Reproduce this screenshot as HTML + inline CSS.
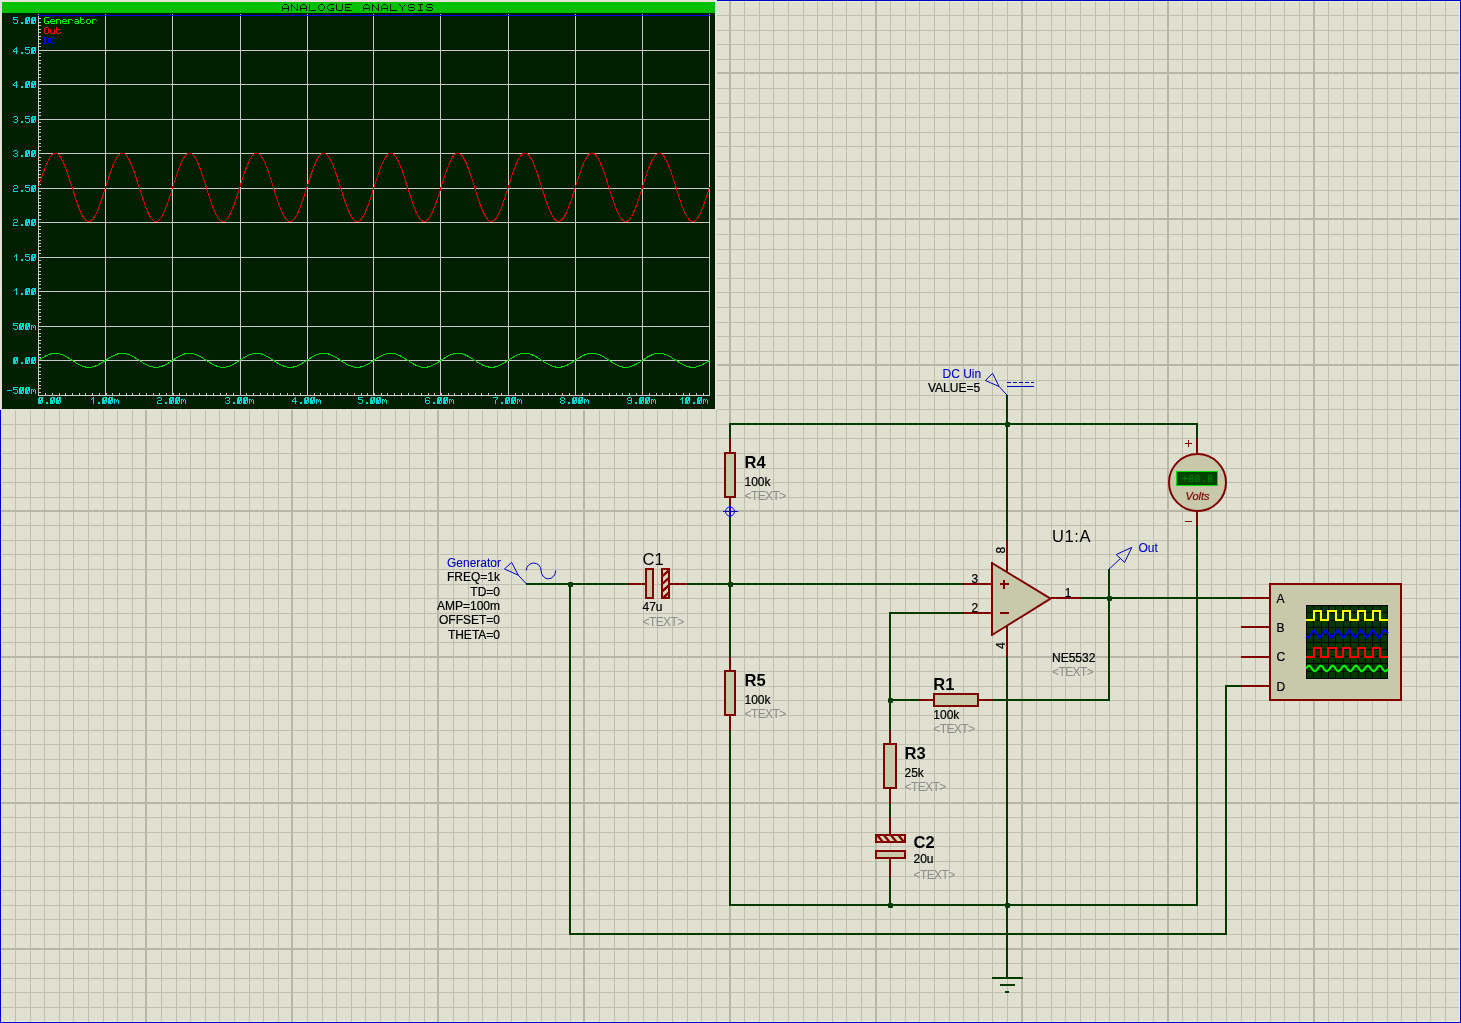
<!DOCTYPE html>
<html><head><meta charset="utf-8"><title>Proteus schematic</title>
<style>html,body{margin:0;padding:0;background:#E0E0D0;}body{width:1461px;height:1023px;overflow:hidden;position:relative;}svg{position:absolute;left:0;top:0;display:block;will-change:transform;}</style>
</head><body>
<svg width="1461" height="1023" viewBox="0 0 1461 1023">
<rect x="0" y="0" width="1461" height="1023" fill="#E0E0D0"/>
<g shape-rendering="crispEdges">
<rect x="1" y="1" width="1459" height="1" fill="#ECECD8"/>
<rect x="1" y="1021" width="1459" height="1" fill="#ECECD8"/>
<rect x="1459" y="1" width="1" height="1021" fill="#ECECD8"/>
</g>
<g shape-rendering="crispEdges">
<rect x="15" y="1" width="1" height="1021" fill="#BFBFAF"/>
<rect x="30" y="1" width="1" height="1021" fill="#BFBFAF"/>
<rect x="44" y="1" width="1" height="1021" fill="#BFBFAF"/>
<rect x="59" y="1" width="1" height="1021" fill="#BFBFAF"/>
<rect x="73" y="1" width="1" height="1021" fill="#BFBFAF"/>
<rect x="88" y="1" width="1" height="1021" fill="#BFBFAF"/>
<rect x="103" y="1" width="1" height="1021" fill="#BFBFAF"/>
<rect x="117" y="1" width="1" height="1021" fill="#BFBFAF"/>
<rect x="132" y="1" width="1" height="1021" fill="#BFBFAF"/>
<rect x="161" y="1" width="1" height="1021" fill="#BFBFAF"/>
<rect x="176" y="1" width="1" height="1021" fill="#BFBFAF"/>
<rect x="190" y="1" width="1" height="1021" fill="#BFBFAF"/>
<rect x="205" y="1" width="1" height="1021" fill="#BFBFAF"/>
<rect x="219" y="1" width="1" height="1021" fill="#BFBFAF"/>
<rect x="234" y="1" width="1" height="1021" fill="#BFBFAF"/>
<rect x="249" y="1" width="1" height="1021" fill="#BFBFAF"/>
<rect x="263" y="1" width="1" height="1021" fill="#BFBFAF"/>
<rect x="278" y="1" width="1" height="1021" fill="#BFBFAF"/>
<rect x="307" y="1" width="1" height="1021" fill="#BFBFAF"/>
<rect x="322" y="1" width="1" height="1021" fill="#BFBFAF"/>
<rect x="336" y="1" width="1" height="1021" fill="#BFBFAF"/>
<rect x="351" y="1" width="1" height="1021" fill="#BFBFAF"/>
<rect x="365" y="1" width="1" height="1021" fill="#BFBFAF"/>
<rect x="380" y="1" width="1" height="1021" fill="#BFBFAF"/>
<rect x="395" y="1" width="1" height="1021" fill="#BFBFAF"/>
<rect x="409" y="1" width="1" height="1021" fill="#BFBFAF"/>
<rect x="424" y="1" width="1" height="1021" fill="#BFBFAF"/>
<rect x="453" y="1" width="1" height="1021" fill="#BFBFAF"/>
<rect x="468" y="1" width="1" height="1021" fill="#BFBFAF"/>
<rect x="482" y="1" width="1" height="1021" fill="#BFBFAF"/>
<rect x="497" y="1" width="1" height="1021" fill="#BFBFAF"/>
<rect x="511" y="1" width="1" height="1021" fill="#BFBFAF"/>
<rect x="526" y="1" width="1" height="1021" fill="#BFBFAF"/>
<rect x="541" y="1" width="1" height="1021" fill="#BFBFAF"/>
<rect x="555" y="1" width="1" height="1021" fill="#BFBFAF"/>
<rect x="570" y="1" width="1" height="1021" fill="#BFBFAF"/>
<rect x="599" y="1" width="1" height="1021" fill="#BFBFAF"/>
<rect x="614" y="1" width="1" height="1021" fill="#BFBFAF"/>
<rect x="628" y="1" width="1" height="1021" fill="#BFBFAF"/>
<rect x="643" y="1" width="1" height="1021" fill="#BFBFAF"/>
<rect x="657" y="1" width="1" height="1021" fill="#BFBFAF"/>
<rect x="672" y="1" width="1" height="1021" fill="#BFBFAF"/>
<rect x="687" y="1" width="1" height="1021" fill="#BFBFAF"/>
<rect x="701" y="1" width="1" height="1021" fill="#BFBFAF"/>
<rect x="716" y="1" width="1" height="1021" fill="#BFBFAF"/>
<rect x="744" y="1" width="1" height="1021" fill="#BFBFAF"/>
<rect x="759" y="1" width="1" height="1021" fill="#BFBFAF"/>
<rect x="773" y="1" width="1" height="1021" fill="#BFBFAF"/>
<rect x="788" y="1" width="1" height="1021" fill="#BFBFAF"/>
<rect x="803" y="1" width="1" height="1021" fill="#BFBFAF"/>
<rect x="817" y="1" width="1" height="1021" fill="#BFBFAF"/>
<rect x="832" y="1" width="1" height="1021" fill="#BFBFAF"/>
<rect x="846" y="1" width="1" height="1021" fill="#BFBFAF"/>
<rect x="861" y="1" width="1" height="1021" fill="#BFBFAF"/>
<rect x="890" y="1" width="1" height="1021" fill="#BFBFAF"/>
<rect x="905" y="1" width="1" height="1021" fill="#BFBFAF"/>
<rect x="919" y="1" width="1" height="1021" fill="#BFBFAF"/>
<rect x="934" y="1" width="1" height="1021" fill="#BFBFAF"/>
<rect x="949" y="1" width="1" height="1021" fill="#BFBFAF"/>
<rect x="963" y="1" width="1" height="1021" fill="#BFBFAF"/>
<rect x="978" y="1" width="1" height="1021" fill="#BFBFAF"/>
<rect x="992" y="1" width="1" height="1021" fill="#BFBFAF"/>
<rect x="1007" y="1" width="1" height="1021" fill="#BFBFAF"/>
<rect x="1036" y="1" width="1" height="1021" fill="#BFBFAF"/>
<rect x="1051" y="1" width="1" height="1021" fill="#BFBFAF"/>
<rect x="1065" y="1" width="1" height="1021" fill="#BFBFAF"/>
<rect x="1080" y="1" width="1" height="1021" fill="#BFBFAF"/>
<rect x="1095" y="1" width="1" height="1021" fill="#BFBFAF"/>
<rect x="1109" y="1" width="1" height="1021" fill="#BFBFAF"/>
<rect x="1124" y="1" width="1" height="1021" fill="#BFBFAF"/>
<rect x="1138" y="1" width="1" height="1021" fill="#BFBFAF"/>
<rect x="1153" y="1" width="1" height="1021" fill="#BFBFAF"/>
<rect x="1182" y="1" width="1" height="1021" fill="#BFBFAF"/>
<rect x="1197" y="1" width="1" height="1021" fill="#BFBFAF"/>
<rect x="1211" y="1" width="1" height="1021" fill="#BFBFAF"/>
<rect x="1226" y="1" width="1" height="1021" fill="#BFBFAF"/>
<rect x="1241" y="1" width="1" height="1021" fill="#BFBFAF"/>
<rect x="1255" y="1" width="1" height="1021" fill="#BFBFAF"/>
<rect x="1270" y="1" width="1" height="1021" fill="#BFBFAF"/>
<rect x="1284" y="1" width="1" height="1021" fill="#BFBFAF"/>
<rect x="1299" y="1" width="1" height="1021" fill="#BFBFAF"/>
<rect x="1328" y="1" width="1" height="1021" fill="#BFBFAF"/>
<rect x="1343" y="1" width="1" height="1021" fill="#BFBFAF"/>
<rect x="1357" y="1" width="1" height="1021" fill="#BFBFAF"/>
<rect x="1372" y="1" width="1" height="1021" fill="#BFBFAF"/>
<rect x="1387" y="1" width="1" height="1021" fill="#BFBFAF"/>
<rect x="1401" y="1" width="1" height="1021" fill="#BFBFAF"/>
<rect x="1416" y="1" width="1" height="1021" fill="#BFBFAF"/>
<rect x="1430" y="1" width="1" height="1021" fill="#BFBFAF"/>
<rect x="1445" y="1" width="1" height="1021" fill="#BFBFAF"/>
<rect x="1" y="15" width="1458" height="1" fill="#BFBFAF"/>
<rect x="1" y="30" width="1458" height="1" fill="#BFBFAF"/>
<rect x="1" y="44" width="1458" height="1" fill="#BFBFAF"/>
<rect x="1" y="59" width="1458" height="1" fill="#BFBFAF"/>
<rect x="1" y="88" width="1458" height="1" fill="#BFBFAF"/>
<rect x="1" y="103" width="1458" height="1" fill="#BFBFAF"/>
<rect x="1" y="117" width="1458" height="1" fill="#BFBFAF"/>
<rect x="1" y="132" width="1458" height="1" fill="#BFBFAF"/>
<rect x="1" y="146" width="1458" height="1" fill="#BFBFAF"/>
<rect x="1" y="161" width="1458" height="1" fill="#BFBFAF"/>
<rect x="1" y="176" width="1458" height="1" fill="#BFBFAF"/>
<rect x="1" y="190" width="1458" height="1" fill="#BFBFAF"/>
<rect x="1" y="205" width="1458" height="1" fill="#BFBFAF"/>
<rect x="1" y="234" width="1458" height="1" fill="#BFBFAF"/>
<rect x="1" y="249" width="1458" height="1" fill="#BFBFAF"/>
<rect x="1" y="263" width="1458" height="1" fill="#BFBFAF"/>
<rect x="1" y="278" width="1458" height="1" fill="#BFBFAF"/>
<rect x="1" y="292" width="1458" height="1" fill="#BFBFAF"/>
<rect x="1" y="307" width="1458" height="1" fill="#BFBFAF"/>
<rect x="1" y="322" width="1458" height="1" fill="#BFBFAF"/>
<rect x="1" y="336" width="1458" height="1" fill="#BFBFAF"/>
<rect x="1" y="351" width="1458" height="1" fill="#BFBFAF"/>
<rect x="1" y="380" width="1458" height="1" fill="#BFBFAF"/>
<rect x="1" y="395" width="1458" height="1" fill="#BFBFAF"/>
<rect x="1" y="409" width="1458" height="1" fill="#BFBFAF"/>
<rect x="1" y="424" width="1458" height="1" fill="#BFBFAF"/>
<rect x="1" y="438" width="1458" height="1" fill="#BFBFAF"/>
<rect x="1" y="453" width="1458" height="1" fill="#BFBFAF"/>
<rect x="1" y="468" width="1458" height="1" fill="#BFBFAF"/>
<rect x="1" y="482" width="1458" height="1" fill="#BFBFAF"/>
<rect x="1" y="497" width="1458" height="1" fill="#BFBFAF"/>
<rect x="1" y="525" width="1458" height="1" fill="#BFBFAF"/>
<rect x="1" y="540" width="1458" height="1" fill="#BFBFAF"/>
<rect x="1" y="554" width="1458" height="1" fill="#BFBFAF"/>
<rect x="1" y="569" width="1458" height="1" fill="#BFBFAF"/>
<rect x="1" y="584" width="1458" height="1" fill="#BFBFAF"/>
<rect x="1" y="598" width="1458" height="1" fill="#BFBFAF"/>
<rect x="1" y="613" width="1458" height="1" fill="#BFBFAF"/>
<rect x="1" y="627" width="1458" height="1" fill="#BFBFAF"/>
<rect x="1" y="642" width="1458" height="1" fill="#BFBFAF"/>
<rect x="1" y="671" width="1458" height="1" fill="#BFBFAF"/>
<rect x="1" y="686" width="1458" height="1" fill="#BFBFAF"/>
<rect x="1" y="700" width="1458" height="1" fill="#BFBFAF"/>
<rect x="1" y="715" width="1458" height="1" fill="#BFBFAF"/>
<rect x="1" y="730" width="1458" height="1" fill="#BFBFAF"/>
<rect x="1" y="744" width="1458" height="1" fill="#BFBFAF"/>
<rect x="1" y="759" width="1458" height="1" fill="#BFBFAF"/>
<rect x="1" y="773" width="1458" height="1" fill="#BFBFAF"/>
<rect x="1" y="788" width="1458" height="1" fill="#BFBFAF"/>
<rect x="1" y="817" width="1458" height="1" fill="#BFBFAF"/>
<rect x="1" y="832" width="1458" height="1" fill="#BFBFAF"/>
<rect x="1" y="846" width="1458" height="1" fill="#BFBFAF"/>
<rect x="1" y="861" width="1458" height="1" fill="#BFBFAF"/>
<rect x="1" y="876" width="1458" height="1" fill="#BFBFAF"/>
<rect x="1" y="890" width="1458" height="1" fill="#BFBFAF"/>
<rect x="1" y="905" width="1458" height="1" fill="#BFBFAF"/>
<rect x="1" y="919" width="1458" height="1" fill="#BFBFAF"/>
<rect x="1" y="934" width="1458" height="1" fill="#BFBFAF"/>
<rect x="1" y="963" width="1458" height="1" fill="#BFBFAF"/>
<rect x="1" y="978" width="1458" height="1" fill="#BFBFAF"/>
<rect x="1" y="992" width="1458" height="1" fill="#BFBFAF"/>
<rect x="1" y="1007" width="1458" height="1" fill="#BFBFAF"/>
<rect x="145" y="1" width="2" height="1021" fill="#B7B7A7"/>
<rect x="291" y="1" width="2" height="1021" fill="#B7B7A7"/>
<rect x="437" y="1" width="2" height="1021" fill="#B7B7A7"/>
<rect x="583" y="1" width="2" height="1021" fill="#B7B7A7"/>
<rect x="729" y="1" width="2" height="1021" fill="#B7B7A7"/>
<rect x="875" y="1" width="2" height="1021" fill="#B7B7A7"/>
<rect x="1021" y="1" width="2" height="1021" fill="#B7B7A7"/>
<rect x="1167" y="1" width="2" height="1021" fill="#B7B7A7"/>
<rect x="1313" y="1" width="2" height="1021" fill="#B7B7A7"/>
<rect x="1" y="72" width="1458" height="2" fill="#B7B7A7"/>
<rect x="1" y="218" width="1458" height="2" fill="#B7B7A7"/>
<rect x="1" y="364" width="1458" height="2" fill="#B7B7A7"/>
<rect x="1" y="510" width="1458" height="2" fill="#B7B7A7"/>
<rect x="1" y="656" width="1458" height="2" fill="#B7B7A7"/>
<rect x="1" y="802" width="1458" height="2" fill="#B7B7A7"/>
<rect x="1" y="948" width="1458" height="2" fill="#B7B7A7"/>
</g>
<g shape-rendering="crispEdges">
<rect x="0" y="0" width="1461" height="1" fill="#0000C8"/>
<rect x="0" y="1022" width="1461" height="1" fill="#0000C8"/>
<rect x="0" y="0" width="1" height="1023" fill="#0000C8"/>
<rect x="1460" y="0" width="1" height="1023" fill="#0000C8"/>
</g>
<g shape-rendering="crispEdges">
<rect x="526" y="583" width="102" height="2" fill="#003C00"/>
<rect x="569" y="584" width="2" height="351" fill="#003C00"/>
<rect x="569" y="933" width="658" height="2" fill="#003C00"/>
<rect x="1225" y="685" width="2" height="250" fill="#003C00"/>
<rect x="1225" y="685" width="16" height="2" fill="#003C00"/>
<rect x="688" y="583" width="275" height="2" fill="#003C00"/>
<rect x="729" y="423" width="469" height="2" fill="#003C00"/>
<rect x="729" y="423" width="2" height="15" fill="#003C00"/>
<rect x="729" y="512" width="2" height="145" fill="#003C00"/>
<rect x="729" y="731" width="2" height="175" fill="#003C00"/>
<rect x="729" y="904" width="469" height="2" fill="#003C00"/>
<rect x="1196" y="423" width="2" height="15" fill="#003C00"/>
<rect x="1196" y="526" width="2" height="380" fill="#003C00"/>
<rect x="889" y="612" width="74" height="2" fill="#003C00"/>
<rect x="889" y="612" width="2" height="118" fill="#003C00"/>
<rect x="889" y="804" width="2" height="13" fill="#003C00"/>
<rect x="889" y="877" width="2" height="29" fill="#003C00"/>
<rect x="889" y="699" width="30" height="2" fill="#003C00"/>
<rect x="993" y="699" width="117" height="2" fill="#003C00"/>
<rect x="1108" y="569" width="2" height="132" fill="#003C00"/>
<rect x="1081" y="597" width="160" height="2" fill="#003C00"/>
<rect x="1006" y="395" width="2" height="145" fill="#003C00"/>
<rect x="1006" y="657" width="2" height="321" fill="#003C00"/>
<rect x="628" y="583" width="17" height="2" fill="#800000"/>
<rect x="670" y="583" width="18" height="2" fill="#800000"/>
<rect x="963" y="583" width="28" height="2" fill="#800000"/>
<rect x="963" y="612" width="28" height="2" fill="#800000"/>
<rect x="1051" y="597" width="30" height="2" fill="#800000"/>
<rect x="1006" y="540" width="2" height="32" fill="#800000"/>
<rect x="1006" y="626" width="2" height="31" fill="#800000"/>
<rect x="729" y="438" width="2" height="14" fill="#800000"/>
<rect x="729" y="498" width="2" height="14" fill="#800000"/>
<rect x="729" y="657" width="2" height="13" fill="#800000"/>
<rect x="729" y="716" width="2" height="15" fill="#800000"/>
<rect x="889" y="730" width="2" height="13" fill="#800000"/>
<rect x="889" y="789" width="2" height="15" fill="#800000"/>
<rect x="889" y="817" width="2" height="17" fill="#800000"/>
<rect x="889" y="859" width="2" height="18" fill="#800000"/>
<rect x="919" y="699" width="14" height="2" fill="#800000"/>
<rect x="979" y="699" width="14" height="2" fill="#800000"/>
<rect x="1196" y="438" width="2" height="15" fill="#800000"/>
<rect x="1196" y="512" width="2" height="14" fill="#800000"/>
<rect x="1241" y="597" width="28" height="2" fill="#800000"/>
<rect x="1241" y="626" width="28" height="2" fill="#800000"/>
<rect x="1241" y="656" width="28" height="2" fill="#800000"/>
<rect x="1241" y="685" width="28" height="2" fill="#800000"/>
<rect x="725" y="453" width="10" height="44" fill="#C8C8AA" stroke="#800000" stroke-width="2"/>
<rect x="725" y="671" width="10" height="44" fill="#C8C8AA" stroke="#800000" stroke-width="2"/>
<rect x="884" y="744" width="12" height="44" fill="#C8C8AA" stroke="#800000" stroke-width="2"/>
<rect x="934" y="694" width="44" height="12" fill="#C8C8AA" stroke="#800000" stroke-width="2"/>
<rect x="646" y="569" width="7" height="29" fill="#C8C8AA" stroke="#800000" stroke-width="2"/>
<rect x="876" y="851" width="29" height="7" fill="#C8C8AA" stroke="#800000" stroke-width="2"/>
</g>
<defs><clipPath id="c1h"><rect x="663" y="570" width="5" height="27"/></clipPath><clipPath id="c2h"><rect x="877" y="836" width="27" height="5"/></clipPath></defs>
<g shape-rendering="crispEdges">
<rect x="662" y="569" width="7" height="29" fill="#D4D8B8" stroke="#800000" stroke-width="2"/>
<rect x="876" y="835" width="29" height="7" fill="#D4D8B8" stroke="#800000" stroke-width="2"/>
</g>
<path d="M661,570.0 L670,561.9 M661,577.4 L670,569.3 M661,585.0 L670,576.9 M661,592.4 L670,584.3 M661,599.7 L670,591.6 " stroke="#800000" stroke-width="2.3" fill="none" clip-path="url(#c1h)"/>
<path d="M869.2,834 L876.6,843 M876.3,834 L883.7,843 M883.0,834 L890.4,843 M890.0,834 L897.4,843 M897.4,834 L904.8,843 " stroke="#800000" stroke-width="2.3" fill="none" clip-path="url(#c2h)"/>
<polygon points="992,563 992,635 1050.6,598.6" fill="#C8C8AA" stroke="#800000" stroke-width="2" stroke-linejoin="bevel"/>
<rect x="991" y="562" width="2" height="74" fill="#800000" shape-rendering="crispEdges"/>
<g shape-rendering="crispEdges">
<rect x="1000" y="583" width="9" height="2" fill="#800000"/>
<rect x="1003" y="580" width="2" height="9" fill="#800000"/>
<rect x="1000" y="612" width="9" height="2" fill="#800000"/>
</g>
<circle cx="1197.5" cy="482.5" r="28.5" fill="#C8C8AA" stroke="#800000" stroke-width="2"/>
<g shape-rendering="crispEdges">
<rect x="1176" y="471" width="42" height="15" fill="#00E000"/>
<rect x="1177" y="472" width="40" height="13" fill="#004400"/>
<rect x="1185" y="443" width="7" height="1" fill="#800000"/>
<rect x="1188" y="440" width="1" height="7" fill="#800000"/>
<rect x="1185" y="521" width="7" height="1" fill="#800000"/>
</g>
<text x="1197.5" y="482.0" font-family="'Liberation Mono', sans-serif" font-size="10.5" fill="#008800" font-weight="normal" text-anchor="middle">+88.8</text>
<text x="1197.5" y="499.8" font-family="'Liberation Sans', sans-serif" font-size="11" fill="#800000" font-weight="normal" text-anchor="middle" font-style="italic" stroke="#800000" stroke-width="0.22">Volts</text>
<g shape-rendering="crispEdges">
<rect x="1270" y="584" width="131" height="116" fill="#C8C8AA" stroke="#800000" stroke-width="2"/>
<rect x="1306" y="605" width="82" height="74" fill="#003800"/>
<rect x="1306" y="605" width="1" height="74" fill="#000000"/>
<rect x="1313" y="605" width="1" height="74" fill="#000000"/>
<rect x="1321" y="605" width="1" height="74" fill="#000000"/>
<rect x="1328" y="605" width="1" height="74" fill="#000000"/>
<rect x="1335" y="605" width="1" height="74" fill="#000000"/>
<rect x="1343" y="605" width="1" height="74" fill="#000000"/>
<rect x="1350" y="605" width="1" height="74" fill="#000000"/>
<rect x="1358" y="605" width="1" height="74" fill="#000000"/>
<rect x="1365" y="605" width="1" height="74" fill="#000000"/>
<rect x="1372" y="605" width="1" height="74" fill="#000000"/>
<rect x="1380" y="605" width="1" height="74" fill="#000000"/>
<rect x="1387" y="605" width="1" height="74" fill="#000000"/>
<rect x="1306" y="605" width="82" height="1" fill="#000000"/>
<rect x="1306" y="612" width="82" height="1" fill="#000000"/>
<rect x="1306" y="620" width="82" height="1" fill="#000000"/>
<rect x="1306" y="627" width="82" height="1" fill="#000000"/>
<rect x="1306" y="634" width="82" height="1" fill="#000000"/>
<rect x="1306" y="642" width="82" height="1" fill="#000000"/>
<rect x="1306" y="649" width="82" height="1" fill="#000000"/>
<rect x="1306" y="656" width="82" height="1" fill="#000000"/>
<rect x="1306" y="663" width="82" height="1" fill="#000000"/>
<rect x="1306" y="671" width="82" height="1" fill="#000000"/>
<rect x="1306" y="678" width="82" height="1" fill="#000000"/>
</g>
<polyline points="1306.0,620 1313.6,620 1313.6,611 1321.0,611 1321.0,620 1328.3,620 1328.3,611 1335.7,611 1335.7,620 1343.0,620 1343.0,611 1350.4,611 1350.4,620 1357.8,620 1357.8,611 1365.2,611 1365.2,620 1372.5,620 1372.5,611 1379.9,611 1379.9,620 1388.0,620" fill="none" stroke="#FFFF00" stroke-width="2" shape-rendering="crispEdges"/>
<polyline points="1306.0,657 1313.6,657 1313.6,648 1321.0,648 1321.0,657 1328.3,657 1328.3,648 1335.7,648 1335.7,657 1343.0,657 1343.0,648 1350.4,648 1350.4,657 1357.8,657 1357.8,648 1365.2,648 1365.2,657 1372.5,657 1372.5,648 1379.9,648 1379.9,657 1388.0,657" fill="none" stroke="#FF0000" stroke-width="2" shape-rendering="crispEdges"/>
<polyline points="1306.0,636.5 1308.3,637.8 1313.8,630.2 1319.7,637.8 1325.4,630.2 1331.6,637.8 1337.5,630.2 1343.2,637.8 1349.4,630.2 1354.9,637.8 1361.0,630.2 1366.8,637.8 1372.7,630.2 1378.8,637.8 1384.3,630.2 1388.1,633.0" fill="none" stroke="#0000FF" stroke-width="2"/>
<polyline points="1306.0,668.6 1307.0,667.2 1308.0,666.1 1309.0,665.7 1310.0,666.1 1311.0,667.1 1312.0,668.6 1313.0,670.0 1314.0,671.0 1315.0,671.3 1316.0,670.8 1317.0,669.7 1318.0,668.2 1319.0,666.9 1320.0,665.9 1321.0,665.7 1322.0,666.3 1323.0,667.5 1324.0,668.9 1325.0,670.3 1326.0,671.1 1327.0,671.2 1328.0,670.6 1329.0,669.3 1330.0,667.9 1331.0,666.6 1332.0,665.8 1333.0,665.8 1334.0,666.5 1335.0,667.8 1336.0,669.3 1337.0,670.6 1338.0,671.2 1339.0,671.2 1340.0,670.3 1341.0,669.0 1342.0,667.5 1343.0,666.3 1344.0,665.7 1345.0,665.9 1346.0,666.8 1347.0,668.2 1348.0,669.7 1349.0,670.8 1350.0,671.3 1351.0,671.0 1352.0,670.0 1353.0,668.6 1354.0,667.2 1355.0,666.1 1356.0,665.7 1357.0,666.1 1358.0,667.1 1359.0,668.6 1360.0,670.0 1361.0,671.0 1362.0,671.3 1363.0,670.8 1364.0,669.7 1365.0,668.2 1366.0,666.9 1367.0,665.9 1368.0,665.7 1369.0,666.3 1370.0,667.5 1371.0,668.9 1372.0,670.3 1373.0,671.1 1374.0,671.2 1375.0,670.6 1376.0,669.3 1377.0,667.9 1378.0,666.6 1379.0,665.8 1380.0,665.8 1381.0,666.5 1382.0,667.8 1383.0,669.3 1384.0,670.6 1385.0,671.2 1386.0,671.2 1387.0,670.3 1388.0,669.0" fill="none" stroke="#00FF00" stroke-width="2"/>
<text x="1276.5" y="602.9" font-family="'Liberation Sans', sans-serif" font-size="12" fill="#000000" font-weight="normal" text-anchor="start" stroke="#000000" stroke-width="0.22">A</text>
<text x="1276.5" y="631.7" font-family="'Liberation Sans', sans-serif" font-size="12" fill="#000000" font-weight="normal" text-anchor="start" stroke="#000000" stroke-width="0.22">B</text>
<text x="1276.5" y="661.4" font-family="'Liberation Sans', sans-serif" font-size="12" fill="#000000" font-weight="normal" text-anchor="start" stroke="#000000" stroke-width="0.22">C</text>
<text x="1276.5" y="690.7" font-family="'Liberation Sans', sans-serif" font-size="12" fill="#000000" font-weight="normal" text-anchor="start" stroke="#000000" stroke-width="0.22">D</text>
<g shape-rendering="crispEdges">
<rect x="992" y="977" width="31" height="2" fill="#003C00"/>
<rect x="1000" y="984" width="15" height="2" fill="#003C00"/>
<rect x="1005" y="991" width="4" height="2" fill="#003C00"/>
</g>
<rect x="568" y="582" width="5" height="5" rx="1.2" fill="#003C00"/>
<rect x="728" y="582" width="5" height="5" rx="1.2" fill="#003C00"/>
<rect x="1005" y="422" width="5" height="5" rx="1.2" fill="#003C00"/>
<rect x="888" y="698" width="5" height="5" rx="1.2" fill="#003C00"/>
<rect x="888" y="903" width="5" height="5" rx="1.2" fill="#003C00"/>
<rect x="1005" y="903" width="5" height="5" rx="1.2" fill="#003C00"/>
<rect x="1107" y="596" width="5" height="5" rx="1.2" fill="#003C00"/>
<path d="M504.5,569 L511.6,562.3 L518.3,575.2 Z M518.3,575.2 L526.5,584" fill="none" stroke="#0000C8" stroke-width="1"/>
<path d="M526.3,570.5 A7.4,7.5 0 0 1 541.1,570.5 A7.3,8.3 0 0 0 555.7,570.5" fill="none" stroke="#0000C8" stroke-width="1"/>
<path d="M985.3,380.5 L992.6,373.3 L999.1,386.5 Z M999.1,386.5 L1007.5,395.6" fill="none" stroke="#0000C8" stroke-width="1"/>
<path d="M1007,386.5 L1034,386.5" fill="none" stroke="#0000C8" stroke-width="1" shape-rendering="crispEdges"/>
<path d="M1007,382.5 L1034,382.5" fill="none" stroke="#0000C8" stroke-width="1" stroke-dasharray="4 2" shape-rendering="crispEdges"/>
<path d="M1109,569.2 L1120.4,558.5 M1116.2,554.5 L1131.8,547.4 L1124.6,562.4 Z" fill="none" stroke="#0000C8" stroke-width="1"/>
<circle cx="730" cy="511.5" r="4.5" fill="none" stroke="#0000C8" stroke-width="1"/>
<path d="M723,511.5 L738,511.5 M730,506 L730,517" fill="none" stroke="#0000C8" stroke-width="1" shape-rendering="crispEdges"/>
<text x="501" y="567" font-family="'Liberation Sans', sans-serif" font-size="12" fill="#0000C8" font-weight="normal" text-anchor="end" stroke="#0000C8" stroke-width="0.1">Generator</text>
<text x="500" y="581" font-family="'Liberation Sans', sans-serif" font-size="12" fill="#000000" font-weight="normal" text-anchor="end" stroke="#000000" stroke-width="0.22">FREQ=1k</text>
<text x="500" y="595.7" font-family="'Liberation Sans', sans-serif" font-size="12" fill="#000000" font-weight="normal" text-anchor="end" stroke="#000000" stroke-width="0.22">TD=0</text>
<text x="500" y="610" font-family="'Liberation Sans', sans-serif" font-size="12" fill="#000000" font-weight="normal" text-anchor="end" stroke="#000000" stroke-width="0.22">AMP=100m</text>
<text x="500" y="624.4" font-family="'Liberation Sans', sans-serif" font-size="12" fill="#000000" font-weight="normal" text-anchor="end" stroke="#000000" stroke-width="0.22">OFFSET=0</text>
<text x="500" y="638.8" font-family="'Liberation Sans', sans-serif" font-size="12" fill="#000000" font-weight="normal" text-anchor="end" stroke="#000000" stroke-width="0.22">THETA=0</text>
<text x="942.5" y="377.8" font-family="'Liberation Sans', sans-serif" font-size="12" fill="#0000C8" font-weight="normal" text-anchor="start" stroke="#0000C8" stroke-width="0.1">DC Uin</text>
<text x="928" y="391.6" font-family="'Liberation Sans', sans-serif" font-size="12" fill="#000000" font-weight="normal" text-anchor="start" stroke="#000000" stroke-width="0.22">VALUE=5</text>
<text x="1138.5" y="551.9" font-family="'Liberation Sans', sans-serif" font-size="12" fill="#0000C8" font-weight="normal" text-anchor="start" stroke="#0000C8" stroke-width="0.1">Out</text>
<text x="642.5" y="564.6" font-family="'Liberation Sans', sans-serif" font-size="16.5" fill="#000000" font-weight="normal" text-anchor="start">C1</text>
<text x="642.5" y="610.6" font-family="'Liberation Sans', sans-serif" font-size="12" fill="#000000" font-weight="normal" text-anchor="start" stroke="#000000" stroke-width="0.22">47u</text>
<text x="642.5" y="625.6" font-family="'Liberation Sans', sans-serif" font-size="12" fill="#8C8C8C" font-weight="normal" text-anchor="start" letter-spacing="-0.6">&lt;TEXT&gt;</text>
<text x="744.5" y="468.4" font-family="'Liberation Sans', sans-serif" font-size="16.5" fill="#000000" font-weight="bold" text-anchor="start">R4</text>
<text x="744.5" y="485.6" font-family="'Liberation Sans', sans-serif" font-size="12" fill="#000000" font-weight="normal" text-anchor="start" stroke="#000000" stroke-width="0.22">100k</text>
<text x="744.5" y="499.9" font-family="'Liberation Sans', sans-serif" font-size="12" fill="#8C8C8C" font-weight="normal" text-anchor="start" letter-spacing="-0.6">&lt;TEXT&gt;</text>
<text x="744.5" y="686.4" font-family="'Liberation Sans', sans-serif" font-size="16.5" fill="#000000" font-weight="bold" text-anchor="start">R5</text>
<text x="744.5" y="703.6" font-family="'Liberation Sans', sans-serif" font-size="12" fill="#000000" font-weight="normal" text-anchor="start" stroke="#000000" stroke-width="0.22">100k</text>
<text x="744.5" y="717.9" font-family="'Liberation Sans', sans-serif" font-size="12" fill="#8C8C8C" font-weight="normal" text-anchor="start" letter-spacing="-0.6">&lt;TEXT&gt;</text>
<text x="933.3" y="689.7" font-family="'Liberation Sans', sans-serif" font-size="16.5" fill="#000000" font-weight="bold" text-anchor="start">R1</text>
<text x="933.3" y="718.7" font-family="'Liberation Sans', sans-serif" font-size="12" fill="#000000" font-weight="normal" text-anchor="start" stroke="#000000" stroke-width="0.22">100k</text>
<text x="933.3" y="733.3" font-family="'Liberation Sans', sans-serif" font-size="12" fill="#8C8C8C" font-weight="normal" text-anchor="start" letter-spacing="-0.6">&lt;TEXT&gt;</text>
<text x="904.5" y="759.3" font-family="'Liberation Sans', sans-serif" font-size="16.5" fill="#000000" font-weight="bold" text-anchor="start">R3</text>
<text x="904.5" y="776.5" font-family="'Liberation Sans', sans-serif" font-size="12" fill="#000000" font-weight="normal" text-anchor="start" stroke="#000000" stroke-width="0.22">25k</text>
<text x="904.5" y="790.7" font-family="'Liberation Sans', sans-serif" font-size="12" fill="#8C8C8C" font-weight="normal" text-anchor="start" letter-spacing="-0.6">&lt;TEXT&gt;</text>
<text x="913.5" y="847.7" font-family="'Liberation Sans', sans-serif" font-size="16.5" fill="#000000" font-weight="bold" text-anchor="start">C2</text>
<text x="913.5" y="863.4" font-family="'Liberation Sans', sans-serif" font-size="12" fill="#000000" font-weight="normal" text-anchor="start" stroke="#000000" stroke-width="0.22">20u</text>
<text x="913.5" y="878.5" font-family="'Liberation Sans', sans-serif" font-size="12" fill="#8C8C8C" font-weight="normal" text-anchor="start" letter-spacing="-0.6">&lt;TEXT&gt;</text>
<text x="1052" y="542.4" font-family="'Liberation Sans', sans-serif" font-size="16.5" fill="#000000" font-weight="normal" text-anchor="start" letter-spacing="0.6">U1:A</text>
<text x="1052" y="661.7" font-family="'Liberation Sans', sans-serif" font-size="12" fill="#000000" font-weight="normal" text-anchor="start" stroke="#000000" stroke-width="0.22">NE5532</text>
<text x="1052" y="676.2" font-family="'Liberation Sans', sans-serif" font-size="12" fill="#8C8C8C" font-weight="normal" text-anchor="start" letter-spacing="-0.6">&lt;TEXT&gt;</text>
<text x="971.5" y="582.5" font-family="'Liberation Sans', sans-serif" font-size="12" fill="#000000" font-weight="normal" text-anchor="start" stroke="#000000" stroke-width="0.22">3</text>
<text x="971.5" y="611.8" font-family="'Liberation Sans', sans-serif" font-size="12" fill="#000000" font-weight="normal" text-anchor="start" stroke="#000000" stroke-width="0.22">2</text>
<text x="1064.8" y="596.7" font-family="'Liberation Sans', sans-serif" font-size="12" fill="#000000" font-weight="normal" text-anchor="start" stroke="#000000" stroke-width="0.22">1</text>
<text x="0" y="0" font-family="'Liberation Sans', sans-serif" font-size="12" fill="#000000" font-weight="normal" text-anchor="start" stroke="#000000" stroke-width="0.22" transform="translate(1005,553.5) rotate(-90)">8</text>
<text x="0" y="0" font-family="'Liberation Sans', sans-serif" font-size="12" fill="#000000" font-weight="normal" text-anchor="start" stroke="#000000" stroke-width="0.22" transform="translate(1005,649) rotate(-90)">4</text>
<g shape-rendering="crispEdges">
<rect x="0" y="0" width="717" height="410" fill="#E4E2D6"/>
<rect x="2" y="2" width="713" height="407" fill="#001E00"/>
<rect x="2" y="2" width="713" height="11" fill="#00C000"/>
<rect x="38" y="14" width="1" height="382" fill="#C8C8C8"/>
<rect x="105" y="14" width="1" height="382" fill="#C8C8C8"/>
<rect x="172" y="14" width="1" height="382" fill="#C8C8C8"/>
<rect x="240" y="14" width="1" height="382" fill="#C8C8C8"/>
<rect x="307" y="14" width="1" height="382" fill="#C8C8C8"/>
<rect x="373" y="14" width="1" height="382" fill="#C8C8C8"/>
<rect x="440" y="14" width="1" height="382" fill="#C8C8C8"/>
<rect x="508" y="14" width="1" height="382" fill="#C8C8C8"/>
<rect x="575" y="14" width="1" height="382" fill="#C8C8C8"/>
<rect x="642" y="14" width="1" height="382" fill="#C8C8C8"/>
<rect x="709" y="14" width="1" height="382" fill="#C8C8C8"/>
<rect x="38" y="15" width="672" height="1" fill="#C8C8C8"/>
<rect x="38" y="50" width="672" height="1" fill="#C8C8C8"/>
<rect x="38" y="84" width="672" height="1" fill="#C8C8C8"/>
<rect x="38" y="119" width="672" height="1" fill="#C8C8C8"/>
<rect x="38" y="153" width="672" height="1" fill="#C8C8C8"/>
<rect x="38" y="188" width="672" height="1" fill="#C8C8C8"/>
<rect x="38" y="222" width="672" height="1" fill="#C8C8C8"/>
<rect x="38" y="257" width="672" height="1" fill="#C8C8C8"/>
<rect x="38" y="291" width="672" height="1" fill="#C8C8C8"/>
<rect x="38" y="326" width="672" height="1" fill="#C8C8C8"/>
<rect x="38" y="360" width="672" height="1" fill="#C8C8C8"/>
<rect x="38" y="395" width="672" height="1" fill="#C8C8C8"/>
<rect x="39" y="15" width="2" height="1" fill="#C8C8C8"/>
<rect x="39" y="18" width="2" height="1" fill="#C8C8C8"/>
<rect x="39" y="22" width="2" height="1" fill="#C8C8C8"/>
<rect x="39" y="25" width="2" height="1" fill="#C8C8C8"/>
<rect x="39" y="29" width="2" height="1" fill="#C8C8C8"/>
<rect x="39" y="32" width="2" height="1" fill="#C8C8C8"/>
<rect x="39" y="36" width="2" height="1" fill="#C8C8C8"/>
<rect x="39" y="39" width="2" height="1" fill="#C8C8C8"/>
<rect x="39" y="43" width="2" height="1" fill="#C8C8C8"/>
<rect x="39" y="46" width="2" height="1" fill="#C8C8C8"/>
<rect x="39" y="50" width="2" height="1" fill="#C8C8C8"/>
<rect x="39" y="53" width="2" height="1" fill="#C8C8C8"/>
<rect x="39" y="56" width="2" height="1" fill="#C8C8C8"/>
<rect x="39" y="60" width="2" height="1" fill="#C8C8C8"/>
<rect x="39" y="63" width="2" height="1" fill="#C8C8C8"/>
<rect x="39" y="67" width="2" height="1" fill="#C8C8C8"/>
<rect x="39" y="70" width="2" height="1" fill="#C8C8C8"/>
<rect x="39" y="74" width="2" height="1" fill="#C8C8C8"/>
<rect x="39" y="77" width="2" height="1" fill="#C8C8C8"/>
<rect x="39" y="81" width="2" height="1" fill="#C8C8C8"/>
<rect x="39" y="84" width="2" height="1" fill="#C8C8C8"/>
<rect x="39" y="88" width="2" height="1" fill="#C8C8C8"/>
<rect x="39" y="91" width="2" height="1" fill="#C8C8C8"/>
<rect x="39" y="94" width="2" height="1" fill="#C8C8C8"/>
<rect x="39" y="98" width="2" height="1" fill="#C8C8C8"/>
<rect x="39" y="101" width="2" height="1" fill="#C8C8C8"/>
<rect x="39" y="105" width="2" height="1" fill="#C8C8C8"/>
<rect x="39" y="108" width="2" height="1" fill="#C8C8C8"/>
<rect x="39" y="112" width="2" height="1" fill="#C8C8C8"/>
<rect x="39" y="115" width="2" height="1" fill="#C8C8C8"/>
<rect x="39" y="119" width="2" height="1" fill="#C8C8C8"/>
<rect x="39" y="122" width="2" height="1" fill="#C8C8C8"/>
<rect x="39" y="126" width="2" height="1" fill="#C8C8C8"/>
<rect x="39" y="129" width="2" height="1" fill="#C8C8C8"/>
<rect x="39" y="132" width="2" height="1" fill="#C8C8C8"/>
<rect x="39" y="136" width="2" height="1" fill="#C8C8C8"/>
<rect x="39" y="139" width="2" height="1" fill="#C8C8C8"/>
<rect x="39" y="143" width="2" height="1" fill="#C8C8C8"/>
<rect x="39" y="146" width="2" height="1" fill="#C8C8C8"/>
<rect x="39" y="150" width="2" height="1" fill="#C8C8C8"/>
<rect x="39" y="153" width="2" height="1" fill="#C8C8C8"/>
<rect x="39" y="157" width="2" height="1" fill="#C8C8C8"/>
<rect x="39" y="160" width="2" height="1" fill="#C8C8C8"/>
<rect x="39" y="164" width="2" height="1" fill="#C8C8C8"/>
<rect x="39" y="167" width="2" height="1" fill="#C8C8C8"/>
<rect x="39" y="170" width="2" height="1" fill="#C8C8C8"/>
<rect x="39" y="174" width="2" height="1" fill="#C8C8C8"/>
<rect x="39" y="177" width="2" height="1" fill="#C8C8C8"/>
<rect x="39" y="181" width="2" height="1" fill="#C8C8C8"/>
<rect x="39" y="184" width="2" height="1" fill="#C8C8C8"/>
<rect x="39" y="188" width="2" height="1" fill="#C8C8C8"/>
<rect x="39" y="191" width="2" height="1" fill="#C8C8C8"/>
<rect x="39" y="195" width="2" height="1" fill="#C8C8C8"/>
<rect x="39" y="198" width="2" height="1" fill="#C8C8C8"/>
<rect x="39" y="202" width="2" height="1" fill="#C8C8C8"/>
<rect x="39" y="205" width="2" height="1" fill="#C8C8C8"/>
<rect x="39" y="208" width="2" height="1" fill="#C8C8C8"/>
<rect x="39" y="212" width="2" height="1" fill="#C8C8C8"/>
<rect x="39" y="215" width="2" height="1" fill="#C8C8C8"/>
<rect x="39" y="219" width="2" height="1" fill="#C8C8C8"/>
<rect x="39" y="222" width="2" height="1" fill="#C8C8C8"/>
<rect x="39" y="226" width="2" height="1" fill="#C8C8C8"/>
<rect x="39" y="229" width="2" height="1" fill="#C8C8C8"/>
<rect x="39" y="233" width="2" height="1" fill="#C8C8C8"/>
<rect x="39" y="236" width="2" height="1" fill="#C8C8C8"/>
<rect x="39" y="240" width="2" height="1" fill="#C8C8C8"/>
<rect x="39" y="243" width="2" height="1" fill="#C8C8C8"/>
<rect x="39" y="246" width="2" height="1" fill="#C8C8C8"/>
<rect x="39" y="250" width="2" height="1" fill="#C8C8C8"/>
<rect x="39" y="253" width="2" height="1" fill="#C8C8C8"/>
<rect x="39" y="257" width="2" height="1" fill="#C8C8C8"/>
<rect x="39" y="260" width="2" height="1" fill="#C8C8C8"/>
<rect x="39" y="264" width="2" height="1" fill="#C8C8C8"/>
<rect x="39" y="267" width="2" height="1" fill="#C8C8C8"/>
<rect x="39" y="271" width="2" height="1" fill="#C8C8C8"/>
<rect x="39" y="274" width="2" height="1" fill="#C8C8C8"/>
<rect x="39" y="278" width="2" height="1" fill="#C8C8C8"/>
<rect x="39" y="281" width="2" height="1" fill="#C8C8C8"/>
<rect x="39" y="284" width="2" height="1" fill="#C8C8C8"/>
<rect x="39" y="288" width="2" height="1" fill="#C8C8C8"/>
<rect x="39" y="291" width="2" height="1" fill="#C8C8C8"/>
<rect x="39" y="295" width="2" height="1" fill="#C8C8C8"/>
<rect x="39" y="298" width="2" height="1" fill="#C8C8C8"/>
<rect x="39" y="302" width="2" height="1" fill="#C8C8C8"/>
<rect x="39" y="305" width="2" height="1" fill="#C8C8C8"/>
<rect x="39" y="309" width="2" height="1" fill="#C8C8C8"/>
<rect x="39" y="312" width="2" height="1" fill="#C8C8C8"/>
<rect x="39" y="316" width="2" height="1" fill="#C8C8C8"/>
<rect x="39" y="319" width="2" height="1" fill="#C8C8C8"/>
<rect x="39" y="322" width="2" height="1" fill="#C8C8C8"/>
<rect x="39" y="326" width="2" height="1" fill="#C8C8C8"/>
<rect x="39" y="329" width="2" height="1" fill="#C8C8C8"/>
<rect x="39" y="333" width="2" height="1" fill="#C8C8C8"/>
<rect x="39" y="336" width="2" height="1" fill="#C8C8C8"/>
<rect x="39" y="340" width="2" height="1" fill="#C8C8C8"/>
<rect x="39" y="343" width="2" height="1" fill="#C8C8C8"/>
<rect x="39" y="347" width="2" height="1" fill="#C8C8C8"/>
<rect x="39" y="350" width="2" height="1" fill="#C8C8C8"/>
<rect x="39" y="354" width="2" height="1" fill="#C8C8C8"/>
<rect x="39" y="357" width="2" height="1" fill="#C8C8C8"/>
<rect x="39" y="360" width="2" height="1" fill="#C8C8C8"/>
<rect x="39" y="364" width="2" height="1" fill="#C8C8C8"/>
<rect x="39" y="367" width="2" height="1" fill="#C8C8C8"/>
<rect x="39" y="371" width="2" height="1" fill="#C8C8C8"/>
<rect x="39" y="374" width="2" height="1" fill="#C8C8C8"/>
<rect x="39" y="378" width="2" height="1" fill="#C8C8C8"/>
<rect x="39" y="381" width="2" height="1" fill="#C8C8C8"/>
<rect x="39" y="385" width="2" height="1" fill="#C8C8C8"/>
<rect x="39" y="388" width="2" height="1" fill="#C8C8C8"/>
<rect x="39" y="392" width="2" height="1" fill="#C8C8C8"/>
<rect x="39" y="395" width="2" height="1" fill="#C8C8C8"/>
<rect x="38" y="393" width="1" height="2" fill="#C8C8C8"/>
<rect x="45" y="393" width="1" height="2" fill="#C8C8C8"/>
<rect x="52" y="393" width="1" height="2" fill="#C8C8C8"/>
<rect x="59" y="393" width="1" height="2" fill="#C8C8C8"/>
<rect x="65" y="393" width="1" height="2" fill="#C8C8C8"/>
<rect x="72" y="393" width="1" height="2" fill="#C8C8C8"/>
<rect x="79" y="393" width="1" height="2" fill="#C8C8C8"/>
<rect x="85" y="393" width="1" height="2" fill="#C8C8C8"/>
<rect x="92" y="393" width="1" height="2" fill="#C8C8C8"/>
<rect x="99" y="393" width="1" height="2" fill="#C8C8C8"/>
<rect x="106" y="393" width="1" height="2" fill="#C8C8C8"/>
<rect x="112" y="393" width="1" height="2" fill="#C8C8C8"/>
<rect x="119" y="393" width="1" height="2" fill="#C8C8C8"/>
<rect x="126" y="393" width="1" height="2" fill="#C8C8C8"/>
<rect x="132" y="393" width="1" height="2" fill="#C8C8C8"/>
<rect x="139" y="393" width="1" height="2" fill="#C8C8C8"/>
<rect x="146" y="393" width="1" height="2" fill="#C8C8C8"/>
<rect x="153" y="393" width="1" height="2" fill="#C8C8C8"/>
<rect x="159" y="393" width="1" height="2" fill="#C8C8C8"/>
<rect x="166" y="393" width="1" height="2" fill="#C8C8C8"/>
<rect x="173" y="393" width="1" height="2" fill="#C8C8C8"/>
<rect x="179" y="393" width="1" height="2" fill="#C8C8C8"/>
<rect x="186" y="393" width="1" height="2" fill="#C8C8C8"/>
<rect x="193" y="393" width="1" height="2" fill="#C8C8C8"/>
<rect x="199" y="393" width="1" height="2" fill="#C8C8C8"/>
<rect x="206" y="393" width="1" height="2" fill="#C8C8C8"/>
<rect x="213" y="393" width="1" height="2" fill="#C8C8C8"/>
<rect x="220" y="393" width="1" height="2" fill="#C8C8C8"/>
<rect x="226" y="393" width="1" height="2" fill="#C8C8C8"/>
<rect x="233" y="393" width="1" height="2" fill="#C8C8C8"/>
<rect x="240" y="393" width="1" height="2" fill="#C8C8C8"/>
<rect x="246" y="393" width="1" height="2" fill="#C8C8C8"/>
<rect x="253" y="393" width="1" height="2" fill="#C8C8C8"/>
<rect x="260" y="393" width="1" height="2" fill="#C8C8C8"/>
<rect x="267" y="393" width="1" height="2" fill="#C8C8C8"/>
<rect x="273" y="393" width="1" height="2" fill="#C8C8C8"/>
<rect x="280" y="393" width="1" height="2" fill="#C8C8C8"/>
<rect x="287" y="393" width="1" height="2" fill="#C8C8C8"/>
<rect x="293" y="393" width="1" height="2" fill="#C8C8C8"/>
<rect x="300" y="393" width="1" height="2" fill="#C8C8C8"/>
<rect x="307" y="393" width="1" height="2" fill="#C8C8C8"/>
<rect x="314" y="393" width="1" height="2" fill="#C8C8C8"/>
<rect x="320" y="393" width="1" height="2" fill="#C8C8C8"/>
<rect x="327" y="393" width="1" height="2" fill="#C8C8C8"/>
<rect x="334" y="393" width="1" height="2" fill="#C8C8C8"/>
<rect x="340" y="393" width="1" height="2" fill="#C8C8C8"/>
<rect x="347" y="393" width="1" height="2" fill="#C8C8C8"/>
<rect x="354" y="393" width="1" height="2" fill="#C8C8C8"/>
<rect x="361" y="393" width="1" height="2" fill="#C8C8C8"/>
<rect x="367" y="393" width="1" height="2" fill="#C8C8C8"/>
<rect x="374" y="393" width="1" height="2" fill="#C8C8C8"/>
<rect x="381" y="393" width="1" height="2" fill="#C8C8C8"/>
<rect x="387" y="393" width="1" height="2" fill="#C8C8C8"/>
<rect x="394" y="393" width="1" height="2" fill="#C8C8C8"/>
<rect x="401" y="393" width="1" height="2" fill="#C8C8C8"/>
<rect x="408" y="393" width="1" height="2" fill="#C8C8C8"/>
<rect x="414" y="393" width="1" height="2" fill="#C8C8C8"/>
<rect x="421" y="393" width="1" height="2" fill="#C8C8C8"/>
<rect x="428" y="393" width="1" height="2" fill="#C8C8C8"/>
<rect x="434" y="393" width="1" height="2" fill="#C8C8C8"/>
<rect x="441" y="393" width="1" height="2" fill="#C8C8C8"/>
<rect x="448" y="393" width="1" height="2" fill="#C8C8C8"/>
<rect x="454" y="393" width="1" height="2" fill="#C8C8C8"/>
<rect x="461" y="393" width="1" height="2" fill="#C8C8C8"/>
<rect x="468" y="393" width="1" height="2" fill="#C8C8C8"/>
<rect x="475" y="393" width="1" height="2" fill="#C8C8C8"/>
<rect x="481" y="393" width="1" height="2" fill="#C8C8C8"/>
<rect x="488" y="393" width="1" height="2" fill="#C8C8C8"/>
<rect x="495" y="393" width="1" height="2" fill="#C8C8C8"/>
<rect x="501" y="393" width="1" height="2" fill="#C8C8C8"/>
<rect x="508" y="393" width="1" height="2" fill="#C8C8C8"/>
<rect x="515" y="393" width="1" height="2" fill="#C8C8C8"/>
<rect x="522" y="393" width="1" height="2" fill="#C8C8C8"/>
<rect x="528" y="393" width="1" height="2" fill="#C8C8C8"/>
<rect x="535" y="393" width="1" height="2" fill="#C8C8C8"/>
<rect x="542" y="393" width="1" height="2" fill="#C8C8C8"/>
<rect x="548" y="393" width="1" height="2" fill="#C8C8C8"/>
<rect x="555" y="393" width="1" height="2" fill="#C8C8C8"/>
<rect x="562" y="393" width="1" height="2" fill="#C8C8C8"/>
<rect x="569" y="393" width="1" height="2" fill="#C8C8C8"/>
<rect x="575" y="393" width="1" height="2" fill="#C8C8C8"/>
<rect x="582" y="393" width="1" height="2" fill="#C8C8C8"/>
<rect x="589" y="393" width="1" height="2" fill="#C8C8C8"/>
<rect x="595" y="393" width="1" height="2" fill="#C8C8C8"/>
<rect x="602" y="393" width="1" height="2" fill="#C8C8C8"/>
<rect x="609" y="393" width="1" height="2" fill="#C8C8C8"/>
<rect x="616" y="393" width="1" height="2" fill="#C8C8C8"/>
<rect x="622" y="393" width="1" height="2" fill="#C8C8C8"/>
<rect x="629" y="393" width="1" height="2" fill="#C8C8C8"/>
<rect x="636" y="393" width="1" height="2" fill="#C8C8C8"/>
<rect x="642" y="393" width="1" height="2" fill="#C8C8C8"/>
<rect x="649" y="393" width="1" height="2" fill="#C8C8C8"/>
<rect x="656" y="393" width="1" height="2" fill="#C8C8C8"/>
<rect x="662" y="393" width="1" height="2" fill="#C8C8C8"/>
<rect x="669" y="393" width="1" height="2" fill="#C8C8C8"/>
<rect x="676" y="393" width="1" height="2" fill="#C8C8C8"/>
<rect x="683" y="393" width="1" height="2" fill="#C8C8C8"/>
<rect x="689" y="393" width="1" height="2" fill="#C8C8C8"/>
<rect x="696" y="393" width="1" height="2" fill="#C8C8C8"/>
<rect x="703" y="393" width="1" height="2" fill="#C8C8C8"/>
<rect x="709" y="393" width="1" height="2" fill="#C8C8C8"/>
<rect x="38" y="15" width="672" height="1" fill="#0000E0"/>
</g>
<polyline points="38.5,187.3 39.0,185.7 39.5,184.1 40.0,182.5 40.5,180.9 41.0,179.4 41.5,177.8 42.0,176.3 42.5,174.8 43.0,173.3 43.5,171.9 44.0,170.5 44.5,169.1 45.0,167.7 45.5,166.5 46.0,165.2 46.5,164.0 47.0,162.9 47.5,161.8 48.0,160.7 48.5,159.8 49.0,158.8 49.5,158.0 50.0,157.2 50.5,156.5 51.0,155.8 51.5,155.2 52.0,154.7 52.5,154.2 53.0,153.9 53.5,153.6 54.0,153.3 54.5,153.2 55.0,153.1 55.5,153.1 56.0,153.2 56.5,153.3 57.0,153.5 57.5,153.8 58.0,154.2 58.5,154.6 59.0,155.2 59.5,155.7 60.0,156.4 60.5,157.1 61.0,157.9 61.5,158.7 62.0,159.7 62.5,160.6 63.0,161.7 63.5,162.8 64.0,163.9 64.5,165.1 65.0,166.3 65.5,167.6 66.0,168.9 66.5,170.3 67.0,171.7 67.5,173.2 68.0,174.6 68.5,176.1 69.0,177.7 69.5,179.2 70.0,180.8 70.5,182.4 71.0,183.9 71.5,185.5 72.0,187.1 72.5,188.7 73.0,190.3 73.5,191.9 74.0,193.5 74.5,195.1 75.0,196.6 75.5,198.2 76.0,199.7 76.5,201.1 77.0,202.6 77.5,204.0 78.0,205.4 78.5,206.7 79.0,208.0 79.5,209.3 80.0,210.5 80.5,211.6 81.0,212.7 81.5,213.8 82.0,214.8 82.5,215.7 83.0,216.5 83.5,217.3 84.0,218.1 84.5,218.7 85.0,219.3 85.5,219.9 86.0,220.3 86.5,220.7 87.0,221.0 87.5,221.2 88.0,221.4 88.5,221.5 89.0,221.5 89.5,221.4 90.0,221.3 90.5,221.1 91.0,220.8 91.5,220.4 92.0,220.0 92.5,219.5 93.0,218.9 93.5,218.3 94.0,217.6 94.5,216.8 95.0,215.9 95.5,215.0 96.0,214.1 96.5,213.0 97.0,212.0 97.5,210.8 98.0,209.6 98.5,208.4 99.0,207.1 99.5,205.8 100.0,204.4 100.5,203.0 101.0,201.6 101.5,200.1 102.0,198.6 102.5,197.1 103.0,195.5 103.5,194.0 104.0,192.4 104.5,190.8 105.0,189.2 105.5,187.6 106.0,186.0 106.5,184.4 107.0,182.8 107.5,181.2 108.0,179.7 108.5,178.1 109.0,176.6 109.5,175.1 110.0,173.6 110.5,172.2 111.0,170.7 111.5,169.4 112.0,168.0 112.5,166.7 113.0,165.5 113.5,164.2 114.0,163.1 114.5,162.0 115.0,160.9 115.5,159.9 116.0,159.0 116.5,158.1 117.0,157.3 117.5,156.6 118.0,155.9 118.5,155.3 119.0,154.8 119.5,154.3 120.0,153.9 120.5,153.6 121.0,153.4 121.5,153.2 122.0,153.1 122.5,153.1 123.0,153.2 123.5,153.3 124.0,153.5 124.5,153.8 125.0,154.1 125.5,154.6 126.0,155.1 126.5,155.6 127.0,156.3 127.5,157.0 128.0,157.7 128.5,158.6 129.0,159.5 129.5,160.4 130.0,161.5 130.5,162.5 131.0,163.7 131.5,164.8 132.0,166.1 132.5,167.4 133.0,168.7 133.5,170.0 134.0,171.4 134.5,172.9 135.0,174.3 135.5,175.8 136.0,177.4 136.5,178.9 137.0,180.5 137.5,182.0 138.0,183.6 138.5,185.2 139.0,186.8 139.5,188.4 140.0,190.0 140.5,191.6 141.0,193.2 141.5,194.8 142.0,196.3 142.5,197.9 143.0,199.4 143.5,200.8 144.0,202.3 144.5,203.7 145.0,205.1 145.5,206.5 146.0,207.8 146.5,209.0 147.0,210.2 147.5,211.4 148.0,212.5 148.5,213.6 149.0,214.6 149.5,215.5 150.0,216.4 150.5,217.2 151.0,217.9 151.5,218.6 152.0,219.2 152.5,219.8 153.0,220.2 153.5,220.6 154.0,220.9 154.5,221.2 155.0,221.4 155.5,221.5 156.0,221.5 156.5,221.5 157.0,221.3 157.5,221.1 158.0,220.9 158.5,220.5 159.0,220.1 159.5,219.6 160.0,219.0 160.5,218.4 161.0,217.7 161.5,216.9 162.0,216.1 162.5,215.2 163.0,214.3 163.5,213.3 164.0,212.2 164.5,211.1 165.0,209.9 165.5,208.7 166.0,207.4 166.5,206.1 167.0,204.7 167.5,203.3 168.0,201.9 168.5,200.4 169.0,198.9 169.5,197.4 170.0,195.9 170.5,194.3 171.0,192.7 171.5,191.1 172.0,189.5 172.5,187.9 173.0,186.3 173.5,184.7 174.0,183.1 174.5,181.6 175.0,180.0 175.5,178.4 176.0,176.9 176.5,175.4 177.0,173.9 177.5,172.4 178.0,171.0 178.5,169.6 179.0,168.3 179.5,167.0 180.0,165.7 180.5,164.5 181.0,163.3 181.5,162.2 182.0,161.1 182.5,160.1 183.0,159.2 183.5,158.3 184.0,157.5 184.5,156.7 185.0,156.1 185.5,155.4 186.0,154.9 186.5,154.4 187.0,154.0 187.5,153.7 188.0,153.4 188.5,153.2 189.0,153.1 189.5,153.1 190.0,153.1 190.5,153.3 191.0,153.4 191.5,153.7 192.0,154.1 192.5,154.5 193.0,154.9 193.5,155.5 194.0,156.1 194.5,156.8 195.0,157.6 195.5,158.4 196.0,159.3 196.5,160.2 197.0,161.2 197.5,162.3 198.0,163.4 198.5,164.6 199.0,165.8 199.5,167.1 200.0,168.4 200.5,169.8 201.0,171.2 201.5,172.6 202.0,174.0 202.5,175.5 203.0,177.1 203.5,178.6 204.0,180.1 204.5,181.7 205.0,183.3 205.5,184.9 206.0,186.5 206.5,188.1 207.0,189.7 207.5,191.3 208.0,192.9 208.5,194.5 209.0,196.0 209.5,197.5 210.0,199.1 210.5,200.6 211.0,202.0 211.5,203.4 212.0,204.8 212.5,206.2 213.0,207.5 213.5,208.8 214.0,210.0 214.5,211.2 215.0,212.3 215.5,213.4 216.0,214.4 216.5,215.3 217.0,216.2 217.5,217.0 218.0,217.8 218.5,218.5 219.0,219.1 219.5,219.7 220.0,220.1 220.5,220.5 221.0,220.9 221.5,221.2 222.0,221.3 222.5,221.5 223.0,221.5 223.5,221.5 224.0,221.4 224.5,221.2 225.0,220.9 225.5,220.6 226.0,220.2 226.5,219.7 227.0,219.2 227.5,218.5 228.0,217.9 228.5,217.1 229.0,216.3 229.5,215.4 230.0,214.5 230.5,213.5 231.0,212.4 231.5,211.3 232.0,210.1 232.5,208.9 233.0,207.6 233.5,206.3 234.0,205.0 234.5,203.6 235.0,202.2 235.5,200.7 236.0,199.2 236.5,197.7 237.0,196.2 237.5,194.6 238.0,193.0 238.5,191.5 239.0,189.9 239.5,188.3 240.0,186.7 240.5,185.1 241.0,183.5 241.5,181.9 242.0,180.3 242.5,178.7 243.0,177.2 243.5,175.7 244.0,174.2 244.5,172.7 245.0,171.3 245.5,169.9 246.0,168.5 246.5,167.2 247.0,165.9 247.5,164.7 248.0,163.5 248.5,162.4 249.0,161.3 249.5,160.3 250.0,159.4 250.5,158.5 251.0,157.7 251.5,156.9 252.0,156.2 252.5,155.6 253.0,155.0 253.5,154.5 254.0,154.1 254.5,153.7 255.0,153.5 255.5,153.3 256.0,153.1 256.5,153.1 257.0,153.1 257.5,153.2 258.0,153.4 258.5,153.7 259.0,154.0 259.5,154.4 260.0,154.8 260.5,155.4 261.0,156.0 261.5,156.7 262.0,157.4 262.5,158.2 263.0,159.1 263.5,160.0 264.0,161.0 264.5,162.1 265.0,163.2 265.5,164.4 266.0,165.6 266.5,166.8 267.0,168.1 267.5,169.5 268.0,170.9 268.5,172.3 269.0,173.8 269.5,175.2 270.0,176.7 270.5,178.3 271.0,179.8 271.5,181.4 272.0,183.0 272.5,184.6 273.0,186.2 273.5,187.8 274.0,189.4 274.5,191.0 275.0,192.6 275.5,194.1 276.0,195.7 276.5,197.2 277.0,198.8 277.5,200.3 278.0,201.7 278.5,203.2 279.0,204.6 279.5,205.9 280.0,207.2 280.5,208.5 281.0,209.8 281.5,210.9 282.0,212.1 282.5,213.1 283.0,214.2 283.5,215.1 284.0,216.0 284.5,216.9 285.0,217.6 285.5,218.3 286.0,219.0 286.5,219.5 287.0,220.0 287.5,220.5 288.0,220.8 288.5,221.1 289.0,221.3 289.5,221.4 290.0,221.5 290.5,221.5 291.0,221.4 291.5,221.2 292.0,221.0 292.5,220.7 293.0,220.3 293.5,219.8 294.0,219.3 294.5,218.7 295.0,218.0 295.5,217.3 296.0,216.5 296.5,215.6 297.0,214.7 297.5,213.7 298.0,212.6 298.5,211.5 299.0,210.4 299.5,209.1 300.0,207.9 300.5,206.6 301.0,205.2 301.5,203.9 302.0,202.4 302.5,201.0 303.0,199.5 303.5,198.0 304.0,196.5 304.5,194.9 305.0,193.4 305.5,191.8 306.0,190.2 306.5,188.6 307.0,187.0 307.5,185.4 308.0,183.8 308.5,182.2 309.0,180.6 309.5,179.1 310.0,177.5 310.5,176.0 311.0,174.5 311.5,173.0 312.0,171.6 312.5,170.2 313.0,168.8 313.5,167.5 314.0,166.2 314.5,165.0 315.0,163.8 315.5,162.6 316.0,161.6 316.5,160.5 317.0,159.6 317.5,158.7 318.0,157.8 318.5,157.0 319.0,156.3 319.5,155.7 320.0,155.1 320.5,154.6 321.0,154.2 321.5,153.8 322.0,153.5 322.5,153.3 323.0,153.2 323.5,153.1 324.0,153.1 324.5,153.2 325.0,153.4 325.5,153.6 326.0,153.9 326.5,154.3 327.0,154.7 327.5,155.3 328.0,155.9 328.5,156.5 329.0,157.3 329.5,158.1 330.0,158.9 330.5,159.8 331.0,160.8 331.5,161.9 332.0,163.0 332.5,164.1 333.0,165.3 333.5,166.6 334.0,167.9 334.5,169.2 335.0,170.6 335.5,172.0 336.0,173.5 336.5,174.9 337.0,176.4 337.5,178.0 338.0,179.5 338.5,181.1 339.0,182.7 339.5,184.3 340.0,185.9 340.5,187.5 341.0,189.1 341.5,190.7 342.0,192.2 342.5,193.8 343.0,195.4 343.5,196.9 344.0,198.5 344.5,200.0 345.0,201.4 345.5,202.9 346.0,204.3 346.5,205.7 347.0,207.0 347.5,208.3 348.0,209.5 348.5,210.7 349.0,211.8 349.5,212.9 350.0,214.0 350.5,214.9 351.0,215.9 351.5,216.7 352.0,217.5 352.5,218.2 353.0,218.9 353.5,219.4 354.0,220.0 354.5,220.4 355.0,220.8 355.5,221.1 356.0,221.3 356.5,221.4 357.0,221.5 357.5,221.5 358.0,221.4 358.5,221.3 359.0,221.0 359.5,220.7 360.0,220.4 360.5,219.9 361.0,219.4 361.5,218.8 362.0,218.1 362.5,217.4 363.0,216.6 363.5,215.8 364.0,214.8 364.5,213.9 365.0,212.8 365.5,211.7 366.0,210.6 366.5,209.4 367.0,208.1 367.5,206.9 368.0,205.5 368.5,204.1 369.0,202.7 369.5,201.3 370.0,199.8 370.5,198.3 371.0,196.8 371.5,195.2 372.0,193.7 372.5,192.1 373.0,190.5 373.5,188.9 374.0,187.3 374.5,185.7 375.0,184.1 375.5,182.5 376.0,180.9 376.5,179.4 377.0,177.8 377.5,176.3 378.0,174.8 378.5,173.3 379.0,171.9 379.5,170.5 380.0,169.1 380.5,167.7 381.0,166.5 381.5,165.2 382.0,164.0 382.5,162.9 383.0,161.8 383.5,160.7 384.0,159.8 384.5,158.8 385.0,158.0 385.5,157.2 386.0,156.5 386.5,155.8 387.0,155.2 387.5,154.7 388.0,154.2 388.5,153.9 389.0,153.6 389.5,153.3 390.0,153.2 390.5,153.1 391.0,153.1 391.5,153.2 392.0,153.3 392.5,153.5 393.0,153.8 393.5,154.2 394.0,154.6 394.5,155.2 395.0,155.7 395.5,156.4 396.0,157.1 396.5,157.9 397.0,158.7 397.5,159.7 398.0,160.6 398.5,161.7 399.0,162.8 399.5,163.9 400.0,165.1 400.5,166.3 401.0,167.6 401.5,168.9 402.0,170.3 402.5,171.7 403.0,173.2 403.5,174.6 404.0,176.1 404.5,177.7 405.0,179.2 405.5,180.8 406.0,182.4 406.5,183.9 407.0,185.5 407.5,187.1 408.0,188.7 408.5,190.3 409.0,191.9 409.5,193.5 410.0,195.1 410.5,196.6 411.0,198.2 411.5,199.7 412.0,201.1 412.5,202.6 413.0,204.0 413.5,205.4 414.0,206.7 414.5,208.0 415.0,209.3 415.5,210.5 416.0,211.6 416.5,212.7 417.0,213.8 417.5,214.8 418.0,215.7 418.5,216.5 419.0,217.3 419.5,218.1 420.0,218.7 420.5,219.3 421.0,219.9 421.5,220.3 422.0,220.7 422.5,221.0 423.0,221.2 423.5,221.4 424.0,221.5 424.5,221.5 425.0,221.4 425.5,221.3 426.0,221.1 426.5,220.8 427.0,220.4 427.5,220.0 428.0,219.5 428.5,218.9 429.0,218.3 429.5,217.6 430.0,216.8 430.5,215.9 431.0,215.0 431.5,214.1 432.0,213.0 432.5,212.0 433.0,210.8 433.5,209.6 434.0,208.4 434.5,207.1 435.0,205.8 435.5,204.4 436.0,203.0 436.5,201.6 437.0,200.1 437.5,198.6 438.0,197.1 438.5,195.5 439.0,194.0 439.5,192.4 440.0,190.8 440.5,189.2 441.0,187.6 441.5,186.0 442.0,184.4 442.5,182.8 443.0,181.2 443.5,179.7 444.0,178.1 444.5,176.6 445.0,175.1 445.5,173.6 446.0,172.2 446.5,170.7 447.0,169.4 447.5,168.0 448.0,166.7 448.5,165.5 449.0,164.2 449.5,163.1 450.0,162.0 450.5,160.9 451.0,159.9 451.5,159.0 452.0,158.1 452.5,157.3 453.0,156.6 453.5,155.9 454.0,155.3 454.5,154.8 455.0,154.3 455.5,153.9 456.0,153.6 456.5,153.4 457.0,153.2 457.5,153.1 458.0,153.1 458.5,153.2 459.0,153.3 459.5,153.5 460.0,153.8 460.5,154.1 461.0,154.6 461.5,155.1 462.0,155.6 462.5,156.3 463.0,157.0 463.5,157.7 464.0,158.6 464.5,159.5 465.0,160.4 465.5,161.5 466.0,162.5 466.5,163.7 467.0,164.8 467.5,166.1 468.0,167.4 468.5,168.7 469.0,170.0 469.5,171.4 470.0,172.9 470.5,174.3 471.0,175.8 471.5,177.4 472.0,178.9 472.5,180.5 473.0,182.0 473.5,183.6 474.0,185.2 474.5,186.8 475.0,188.4 475.5,190.0 476.0,191.6 476.5,193.2 477.0,194.8 477.5,196.3 478.0,197.9 478.5,199.4 479.0,200.8 479.5,202.3 480.0,203.7 480.5,205.1 481.0,206.5 481.5,207.8 482.0,209.0 482.5,210.2 483.0,211.4 483.5,212.5 484.0,213.6 484.5,214.6 485.0,215.5 485.5,216.4 486.0,217.2 486.5,217.9 487.0,218.6 487.5,219.2 488.0,219.8 488.5,220.2 489.0,220.6 489.5,220.9 490.0,221.2 490.5,221.4 491.0,221.5 491.5,221.5 492.0,221.5 492.5,221.3 493.0,221.1 493.5,220.9 494.0,220.5 494.5,220.1 495.0,219.6 495.5,219.0 496.0,218.4 496.5,217.7 497.0,216.9 497.5,216.1 498.0,215.2 498.5,214.3 499.0,213.3 499.5,212.2 500.0,211.1 500.5,209.9 501.0,208.7 501.5,207.4 502.0,206.1 502.5,204.7 503.0,203.3 503.5,201.9 504.0,200.4 504.5,198.9 505.0,197.4 505.5,195.9 506.0,194.3 506.5,192.7 507.0,191.1 507.5,189.5 508.0,187.9 508.5,186.3 509.0,184.7 509.5,183.1 510.0,181.6 510.5,180.0 511.0,178.4 511.5,176.9 512.0,175.4 512.5,173.9 513.0,172.4 513.5,171.0 514.0,169.6 514.5,168.3 515.0,167.0 515.5,165.7 516.0,164.5 516.5,163.3 517.0,162.2 517.5,161.1 518.0,160.1 518.5,159.2 519.0,158.3 519.5,157.5 520.0,156.7 520.5,156.1 521.0,155.4 521.5,154.9 522.0,154.4 522.5,154.0 523.0,153.7 523.5,153.4 524.0,153.2 524.5,153.1 525.0,153.1 525.5,153.1 526.0,153.3 526.5,153.4 527.0,153.7 527.5,154.1 528.0,154.5 528.5,154.9 529.0,155.5 529.5,156.1 530.0,156.8 530.5,157.6 531.0,158.4 531.5,159.3 532.0,160.2 532.5,161.2 533.0,162.3 533.5,163.4 534.0,164.6 534.5,165.8 535.0,167.1 535.5,168.4 536.0,169.8 536.5,171.2 537.0,172.6 537.5,174.0 538.0,175.5 538.5,177.1 539.0,178.6 539.5,180.1 540.0,181.7 540.5,183.3 541.0,184.9 541.5,186.5 542.0,188.1 542.5,189.7 543.0,191.3 543.5,192.9 544.0,194.5 544.5,196.0 545.0,197.5 545.5,199.1 546.0,200.6 546.5,202.0 547.0,203.4 547.5,204.8 548.0,206.2 548.5,207.5 549.0,208.8 549.5,210.0 550.0,211.2 550.5,212.3 551.0,213.4 551.5,214.4 552.0,215.3 552.5,216.2 553.0,217.0 553.5,217.8 554.0,218.5 554.5,219.1 555.0,219.7 555.5,220.1 556.0,220.5 556.5,220.9 557.0,221.2 557.5,221.3 558.0,221.5 558.5,221.5 559.0,221.5 559.5,221.4 560.0,221.2 560.5,220.9 561.0,220.6 561.5,220.2 562.0,219.7 562.5,219.2 563.0,218.5 563.5,217.9 564.0,217.1 564.5,216.3 565.0,215.4 565.5,214.5 566.0,213.5 566.5,212.4 567.0,211.3 567.5,210.1 568.0,208.9 568.5,207.6 569.0,206.3 569.5,205.0 570.0,203.6 570.5,202.2 571.0,200.7 571.5,199.2 572.0,197.7 572.5,196.2 573.0,194.6 573.5,193.0 574.0,191.5 574.5,189.9 575.0,188.3 575.5,186.7 576.0,185.1 576.5,183.5 577.0,181.9 577.5,180.3 578.0,178.7 578.5,177.2 579.0,175.7 579.5,174.2 580.0,172.7 580.5,171.3 581.0,169.9 581.5,168.5 582.0,167.2 582.5,165.9 583.0,164.7 583.5,163.5 584.0,162.4 584.5,161.3 585.0,160.3 585.5,159.4 586.0,158.5 586.5,157.7 587.0,156.9 587.5,156.2 588.0,155.6 588.5,155.0 589.0,154.5 589.5,154.1 590.0,153.7 590.5,153.5 591.0,153.3 591.5,153.1 592.0,153.1 592.5,153.1 593.0,153.2 593.5,153.4 594.0,153.7 594.5,154.0 595.0,154.4 595.5,154.8 596.0,155.4 596.5,156.0 597.0,156.7 597.5,157.4 598.0,158.2 598.5,159.1 599.0,160.0 599.5,161.0 600.0,162.1 600.5,163.2 601.0,164.4 601.5,165.6 602.0,166.8 602.5,168.1 603.0,169.5 603.5,170.9 604.0,172.3 604.5,173.8 605.0,175.2 605.5,176.7 606.0,178.3 606.5,179.8 607.0,181.4 607.5,183.0 608.0,184.6 608.5,186.2 609.0,187.8 609.5,189.4 610.0,191.0 610.5,192.6 611.0,194.1 611.5,195.7 612.0,197.2 612.5,198.8 613.0,200.3 613.5,201.7 614.0,203.2 614.5,204.6 615.0,205.9 615.5,207.2 616.0,208.5 616.5,209.8 617.0,210.9 617.5,212.1 618.0,213.1 618.5,214.2 619.0,215.1 619.5,216.0 620.0,216.9 620.5,217.6 621.0,218.3 621.5,219.0 622.0,219.5 622.5,220.0 623.0,220.5 623.5,220.8 624.0,221.1 624.5,221.3 625.0,221.4 625.5,221.5 626.0,221.5 626.5,221.4 627.0,221.2 627.5,221.0 628.0,220.7 628.5,220.3 629.0,219.8 629.5,219.3 630.0,218.7 630.5,218.0 631.0,217.3 631.5,216.5 632.0,215.6 632.5,214.7 633.0,213.7 633.5,212.6 634.0,211.5 634.5,210.4 635.0,209.1 635.5,207.9 636.0,206.6 636.5,205.2 637.0,203.9 637.5,202.4 638.0,201.0 638.5,199.5 639.0,198.0 639.5,196.5 640.0,194.9 640.5,193.4 641.0,191.8 641.5,190.2 642.0,188.6 642.5,187.0 643.0,185.4 643.5,183.8 644.0,182.2 644.5,180.6 645.0,179.1 645.5,177.5 646.0,176.0 646.5,174.5 647.0,173.0 647.5,171.6 648.0,170.2 648.5,168.8 649.0,167.5 649.5,166.2 650.0,165.0 650.5,163.8 651.0,162.6 651.5,161.6 652.0,160.5 652.5,159.6 653.0,158.7 653.5,157.8 654.0,157.0 654.5,156.3 655.0,155.7 655.5,155.1 656.0,154.6 656.5,154.2 657.0,153.8 657.5,153.5 658.0,153.3 658.5,153.2 659.0,153.1 659.5,153.1 660.0,153.2 660.5,153.4 661.0,153.6 661.5,153.9 662.0,154.3 662.5,154.7 663.0,155.3 663.5,155.9 664.0,156.5 664.5,157.3 665.0,158.1 665.5,158.9 666.0,159.8 666.5,160.8 667.0,161.9 667.5,163.0 668.0,164.1 668.5,165.3 669.0,166.6 669.5,167.9 670.0,169.2 670.5,170.6 671.0,172.0 671.5,173.5 672.0,174.9 672.5,176.4 673.0,178.0 673.5,179.5 674.0,181.1 674.5,182.7 675.0,184.3 675.5,185.9 676.0,187.5 676.5,189.1 677.0,190.7 677.5,192.2 678.0,193.8 678.5,195.4 679.0,196.9 679.5,198.5 680.0,200.0 680.5,201.4 681.0,202.9 681.5,204.3 682.0,205.7 682.5,207.0 683.0,208.3 683.5,209.5 684.0,210.7 684.5,211.8 685.0,212.9 685.5,214.0 686.0,214.9 686.5,215.9 687.0,216.7 687.5,217.5 688.0,218.2 688.5,218.9 689.0,219.4 689.5,220.0 690.0,220.4 690.5,220.8 691.0,221.1 691.5,221.3 692.0,221.4 692.5,221.5 693.0,221.5 693.5,221.4 694.0,221.3 694.5,221.0 695.0,220.7 695.5,220.4 696.0,219.9 696.5,219.4 697.0,218.8 697.5,218.1 698.0,217.4 698.5,216.6 699.0,215.8 699.5,214.8 700.0,213.9 700.5,212.8 701.0,211.7 701.5,210.6 702.0,209.4 702.5,208.1 703.0,206.9 703.5,205.5 704.0,204.1 704.5,202.7 705.0,201.3 705.5,199.8 706.0,198.3 706.5,196.8 707.0,195.2 707.5,193.7 708.0,192.1 708.5,190.5 709.0,188.9 709.5,187.3" fill="none" stroke="#E00000" stroke-width="1" shape-rendering="crispEdges"/>
<polyline points="38.5,360.3 39.0,360.0 39.5,359.6 40.0,359.3 40.5,359.0 41.0,358.7 41.5,358.4 42.0,358.0 42.5,357.7 43.0,357.4 43.5,357.1 44.0,356.9 44.5,356.6 45.0,356.3 45.5,356.0 46.0,355.8 46.5,355.5 47.0,355.3 47.5,355.1 48.0,354.9 48.5,354.7 49.0,354.5 49.5,354.3 50.0,354.1 50.5,354.0 51.0,353.9 51.5,353.7 52.0,353.6 52.5,353.5 53.0,353.5 53.5,353.4 54.0,353.3 54.5,353.3 55.0,353.3 55.5,353.3 56.0,353.3 56.5,353.3 57.0,353.4 57.5,353.5 58.0,353.5 58.5,353.6 59.0,353.7 59.5,353.8 60.0,354.0 60.5,354.1 61.0,354.3 61.5,354.5 62.0,354.6 62.5,354.8 63.0,355.1 63.5,355.3 64.0,355.5 64.5,355.8 65.0,356.0 65.5,356.3 66.0,356.5 66.5,356.8 67.0,357.1 67.5,357.4 68.0,357.7 68.5,358.0 69.0,358.3 69.5,358.6 70.0,359.0 70.5,359.3 71.0,359.6 71.5,359.9 72.0,360.3 72.5,360.6 73.0,360.9 73.5,361.2 74.0,361.6 74.5,361.9 75.0,362.2 75.5,362.5 76.0,362.8 76.5,363.1 77.0,363.4 77.5,363.7 78.0,364.0 78.5,364.3 79.0,364.5 79.5,364.8 80.0,365.0 80.5,365.3 81.0,365.5 81.5,365.7 82.0,365.9 82.5,366.1 83.0,366.3 83.5,366.4 84.0,366.6 84.5,366.7 85.0,366.9 85.5,367.0 86.0,367.1 86.5,367.1 87.0,367.2 87.5,367.2 88.0,367.3 88.5,367.3 89.0,367.3 89.5,367.3 90.0,367.3 90.5,367.2 91.0,367.2 91.5,367.1 92.0,367.0 92.5,366.9 93.0,366.8 93.5,366.6 94.0,366.5 94.5,366.3 95.0,366.2 95.5,366.0 96.0,365.8 96.5,365.6 97.0,365.3 97.5,365.1 98.0,364.9 98.5,364.6 99.0,364.4 99.5,364.1 100.0,363.8 100.5,363.5 101.0,363.2 101.5,362.9 102.0,362.6 102.5,362.3 103.0,362.0 103.5,361.7 104.0,361.3 104.5,361.0 105.0,360.7 105.5,360.4 106.0,360.0 106.5,359.7 107.0,359.4 107.5,359.1 108.0,358.7 108.5,358.4 109.0,358.1 109.5,357.8 110.0,357.5 110.5,357.2 111.0,356.9 111.5,356.6 112.0,356.4 112.5,356.1 113.0,355.8 113.5,355.6 114.0,355.3 114.5,355.1 115.0,354.9 115.5,354.7 116.0,354.5 116.5,354.3 117.0,354.2 117.5,354.0 118.0,353.9 118.5,353.8 119.0,353.6 119.5,353.6 120.0,353.5 120.5,353.4 121.0,353.4 121.5,353.3 122.0,353.3 122.5,353.3 123.0,353.3 123.5,353.3 124.0,353.4 124.5,353.4 125.0,353.5 125.5,353.6 126.0,353.7 126.5,353.8 127.0,353.9 127.5,354.1 128.0,354.2 128.5,354.4 129.0,354.6 129.5,354.8 130.0,355.0 130.5,355.2 131.0,355.5 131.5,355.7 132.0,356.0 132.5,356.2 133.0,356.5 133.5,356.8 134.0,357.1 134.5,357.3 135.0,357.6 135.5,358.0 136.0,358.3 136.5,358.6 137.0,358.9 137.5,359.2 138.0,359.5 138.5,359.9 139.0,360.2 139.5,360.5 140.0,360.9 140.5,361.2 141.0,361.5 141.5,361.8 142.0,362.1 142.5,362.5 143.0,362.8 143.5,363.1 144.0,363.4 144.5,363.7 145.0,363.9 145.5,364.2 146.0,364.5 146.5,364.7 147.0,365.0 147.5,365.2 148.0,365.5 148.5,365.7 149.0,365.9 149.5,366.1 150.0,366.2 150.5,366.4 151.0,366.6 151.5,366.7 152.0,366.8 152.5,366.9 153.0,367.0 153.5,367.1 154.0,367.2 154.5,367.2 155.0,367.3 155.5,367.3 156.0,367.3 156.5,367.3 157.0,367.3 157.5,367.2 158.0,367.2 158.5,367.1 159.0,367.0 159.5,366.9 160.0,366.8 160.5,366.7 161.0,366.5 161.5,366.4 162.0,366.2 162.5,366.0 163.0,365.8 163.5,365.6 164.0,365.4 164.5,365.2 165.0,364.9 165.5,364.7 166.0,364.4 166.5,364.1 167.0,363.9 167.5,363.6 168.0,363.3 168.5,363.0 169.0,362.7 169.5,362.4 170.0,362.1 170.5,361.7 171.0,361.4 171.5,361.1 172.0,360.8 172.5,360.4 173.0,360.1 173.5,359.8 174.0,359.4 174.5,359.1 175.0,358.8 175.5,358.5 176.0,358.2 176.5,357.9 177.0,357.6 177.5,357.3 178.0,357.0 178.5,356.7 179.0,356.4 179.5,356.1 180.0,355.9 180.5,355.6 181.0,355.4 181.5,355.2 182.0,354.9 182.5,354.7 183.0,354.5 183.5,354.4 184.0,354.2 184.5,354.0 185.0,353.9 185.5,353.8 186.0,353.7 186.5,353.6 187.0,353.5 187.5,353.4 188.0,353.4 188.5,353.3 189.0,353.3 189.5,353.3 190.0,353.3 190.5,353.3 191.0,353.4 191.5,353.4 192.0,353.5 192.5,353.6 193.0,353.7 193.5,353.8 194.0,353.9 194.5,354.1 195.0,354.2 195.5,354.4 196.0,354.6 196.5,354.8 197.0,355.0 197.5,355.2 198.0,355.4 198.5,355.7 199.0,355.9 199.5,356.2 200.0,356.4 200.5,356.7 201.0,357.0 201.5,357.3 202.0,357.6 202.5,357.9 203.0,358.2 203.5,358.5 204.0,358.8 204.5,359.2 205.0,359.5 205.5,359.8 206.0,360.1 206.5,360.5 207.0,360.8 207.5,361.1 208.0,361.4 208.5,361.8 209.0,362.1 209.5,362.4 210.0,362.7 210.5,363.0 211.0,363.3 211.5,363.6 212.0,363.9 212.5,364.2 213.0,364.4 213.5,364.7 214.0,364.9 214.5,365.2 215.0,365.4 215.5,365.6 216.0,365.8 216.5,366.0 217.0,366.2 217.5,366.4 218.0,366.5 218.5,366.7 219.0,366.8 219.5,366.9 220.0,367.0 220.5,367.1 221.0,367.2 221.5,367.2 222.0,367.3 222.5,367.3 223.0,367.3 223.5,367.3 224.0,367.3 224.5,367.2 225.0,367.2 225.5,367.1 226.0,367.0 226.5,366.9 227.0,366.8 227.5,366.7 228.0,366.6 228.5,366.4 229.0,366.2 229.5,366.1 230.0,365.9 230.5,365.7 231.0,365.4 231.5,365.2 232.0,365.0 232.5,364.7 233.0,364.5 233.5,364.2 234.0,363.9 234.5,363.6 235.0,363.3 235.5,363.0 236.0,362.7 236.5,362.4 237.0,362.1 237.5,361.8 238.0,361.5 238.5,361.2 239.0,360.8 239.5,360.5 240.0,360.2 240.5,359.8 241.0,359.5 241.5,359.2 242.0,358.9 242.5,358.5 243.0,358.2 243.5,357.9 244.0,357.6 244.5,357.3 245.0,357.0 245.5,356.7 246.0,356.5 246.5,356.2 247.0,355.9 247.5,355.7 248.0,355.4 248.5,355.2 249.0,355.0 249.5,354.8 250.0,354.6 250.5,354.4 251.0,354.2 251.5,354.1 252.0,353.9 252.5,353.8 253.0,353.7 253.5,353.6 254.0,353.5 254.5,353.4 255.0,353.4 255.5,353.3 256.0,353.3 256.5,353.3 257.0,353.3 257.5,353.3 258.0,353.4 258.5,353.4 259.0,353.5 259.5,353.6 260.0,353.7 260.5,353.8 261.0,353.9 261.5,354.0 262.0,354.2 262.5,354.4 263.0,354.5 263.5,354.7 264.0,354.9 264.5,355.1 265.0,355.4 265.5,355.6 266.0,355.9 266.5,356.1 267.0,356.4 267.5,356.7 268.0,356.9 268.5,357.2 269.0,357.5 269.5,357.8 270.0,358.1 270.5,358.5 271.0,358.8 271.5,359.1 272.0,359.4 272.5,359.7 273.0,360.1 273.5,360.4 274.0,360.7 274.5,361.1 275.0,361.4 275.5,361.7 276.0,362.0 276.5,362.3 277.0,362.6 277.5,363.0 278.0,363.3 278.5,363.5 279.0,363.8 279.5,364.1 280.0,364.4 280.5,364.6 281.0,364.9 281.5,365.1 282.0,365.4 282.5,365.6 283.0,365.8 283.5,366.0 284.0,366.2 284.5,366.4 285.0,366.5 285.5,366.7 286.0,366.8 286.5,366.9 287.0,367.0 287.5,367.1 288.0,367.2 288.5,367.2 289.0,367.3 289.5,367.3 290.0,367.3 290.5,367.3 291.0,367.3 291.5,367.2 292.0,367.2 292.5,367.1 293.0,367.0 293.5,367.0 294.0,366.8 294.5,366.7 295.0,366.6 295.5,366.4 296.0,366.3 296.5,366.1 297.0,365.9 297.5,365.7 298.0,365.5 298.5,365.3 299.0,365.0 299.5,364.8 300.0,364.5 300.5,364.2 301.0,364.0 301.5,363.7 302.0,363.4 302.5,363.1 303.0,362.8 303.5,362.5 304.0,362.2 304.5,361.9 305.0,361.5 305.5,361.2 306.0,360.9 306.5,360.6 307.0,360.2 307.5,359.9 308.0,359.6 308.5,359.3 309.0,358.9 309.5,358.6 310.0,358.3 310.5,358.0 311.0,357.7 311.5,357.4 312.0,357.1 312.5,356.8 313.0,356.5 313.5,356.2 314.0,356.0 314.5,355.7 315.0,355.5 315.5,355.3 316.0,355.0 316.5,354.8 317.0,354.6 317.5,354.4 318.0,354.3 318.5,354.1 319.0,354.0 319.5,353.8 320.0,353.7 320.5,353.6 321.0,353.5 321.5,353.4 322.0,353.4 322.5,353.3 323.0,353.3 323.5,353.3 324.0,353.3 324.5,353.3 325.0,353.4 325.5,353.4 326.0,353.5 326.5,353.5 327.0,353.6 327.5,353.7 328.0,353.9 328.5,354.0 329.0,354.2 329.5,354.3 330.0,354.5 330.5,354.7 331.0,354.9 331.5,355.1 332.0,355.3 332.5,355.6 333.0,355.8 333.5,356.1 334.0,356.3 334.5,356.6 335.0,356.9 335.5,357.2 336.0,357.5 336.5,357.8 337.0,358.1 337.5,358.4 338.0,358.7 338.5,359.0 339.0,359.4 339.5,359.7 340.0,360.0 340.5,360.3 341.0,360.7 341.5,361.0 342.0,361.3 342.5,361.6 343.0,362.0 343.5,362.3 344.0,362.6 344.5,362.9 345.0,363.2 345.5,363.5 346.0,363.8 346.5,364.1 347.0,364.3 347.5,364.6 348.0,364.8 348.5,365.1 349.0,365.3 349.5,365.5 350.0,365.8 350.5,366.0 351.0,366.1 351.5,366.3 352.0,366.5 352.5,366.6 353.0,366.8 353.5,366.9 354.0,367.0 354.5,367.1 355.0,367.1 355.5,367.2 356.0,367.3 356.5,367.3 357.0,367.3 357.5,367.3 358.0,367.3 358.5,367.3 359.0,367.2 359.5,367.1 360.0,367.1 360.5,367.0 361.0,366.9 361.5,366.7 362.0,366.6 362.5,366.5 363.0,366.3 363.5,366.1 364.0,365.9 364.5,365.7 365.0,365.5 365.5,365.3 366.0,365.1 366.5,364.8 367.0,364.6 367.5,364.3 368.0,364.0 368.5,363.7 369.0,363.5 369.5,363.2 370.0,362.9 370.5,362.6 371.0,362.2 371.5,361.9 372.0,361.6 372.5,361.3 373.0,361.0 373.5,360.6 374.0,360.3 374.5,360.0 375.0,359.6 375.5,359.3 376.0,359.0 376.5,358.7 377.0,358.4 377.5,358.0 378.0,357.7 378.5,357.4 379.0,357.1 379.5,356.9 380.0,356.6 380.5,356.3 381.0,356.0 381.5,355.8 382.0,355.5 382.5,355.3 383.0,355.1 383.5,354.9 384.0,354.7 384.5,354.5 385.0,354.3 385.5,354.1 386.0,354.0 386.5,353.9 387.0,353.7 387.5,353.6 388.0,353.5 388.5,353.5 389.0,353.4 389.5,353.3 390.0,353.3 390.5,353.3 391.0,353.3 391.5,353.3 392.0,353.3 392.5,353.4 393.0,353.5 393.5,353.5 394.0,353.6 394.5,353.7 395.0,353.8 395.5,354.0 396.0,354.1 396.5,354.3 397.0,354.5 397.5,354.6 398.0,354.8 398.5,355.1 399.0,355.3 399.5,355.5 400.0,355.8 400.5,356.0 401.0,356.3 401.5,356.5 402.0,356.8 402.5,357.1 403.0,357.4 403.5,357.7 404.0,358.0 404.5,358.3 405.0,358.6 405.5,359.0 406.0,359.3 406.5,359.6 407.0,359.9 407.5,360.3 408.0,360.6 408.5,360.9 409.0,361.2 409.5,361.6 410.0,361.9 410.5,362.2 411.0,362.5 411.5,362.8 412.0,363.1 412.5,363.4 413.0,363.7 413.5,364.0 414.0,364.3 414.5,364.5 415.0,364.8 415.5,365.0 416.0,365.3 416.5,365.5 417.0,365.7 417.5,365.9 418.0,366.1 418.5,366.3 419.0,366.4 419.5,366.6 420.0,366.7 420.5,366.9 421.0,367.0 421.5,367.1 422.0,367.1 422.5,367.2 423.0,367.2 423.5,367.3 424.0,367.3 424.5,367.3 425.0,367.3 425.5,367.3 426.0,367.2 426.5,367.2 427.0,367.1 427.5,367.0 428.0,366.9 428.5,366.8 429.0,366.6 429.5,366.5 430.0,366.3 430.5,366.2 431.0,366.0 431.5,365.8 432.0,365.6 432.5,365.3 433.0,365.1 433.5,364.9 434.0,364.6 434.5,364.4 435.0,364.1 435.5,363.8 436.0,363.5 436.5,363.2 437.0,362.9 437.5,362.6 438.0,362.3 438.5,362.0 439.0,361.7 439.5,361.3 440.0,361.0 440.5,360.7 441.0,360.4 441.5,360.0 442.0,359.7 442.5,359.4 443.0,359.1 443.5,358.7 444.0,358.4 444.5,358.1 445.0,357.8 445.5,357.5 446.0,357.2 446.5,356.9 447.0,356.6 447.5,356.4 448.0,356.1 448.5,355.8 449.0,355.6 449.5,355.3 450.0,355.1 450.5,354.9 451.0,354.7 451.5,354.5 452.0,354.3 452.5,354.2 453.0,354.0 453.5,353.9 454.0,353.8 454.5,353.6 455.0,353.6 455.5,353.5 456.0,353.4 456.5,353.4 457.0,353.3 457.5,353.3 458.0,353.3 458.5,353.3 459.0,353.3 459.5,353.4 460.0,353.4 460.5,353.5 461.0,353.6 461.5,353.7 462.0,353.8 462.5,353.9 463.0,354.1 463.5,354.2 464.0,354.4 464.5,354.6 465.0,354.8 465.5,355.0 466.0,355.2 466.5,355.5 467.0,355.7 467.5,356.0 468.0,356.2 468.5,356.5 469.0,356.8 469.5,357.1 470.0,357.3 470.5,357.6 471.0,358.0 471.5,358.3 472.0,358.6 472.5,358.9 473.0,359.2 473.5,359.5 474.0,359.9 474.5,360.2 475.0,360.5 475.5,360.9 476.0,361.2 476.5,361.5 477.0,361.8 477.5,362.1 478.0,362.5 478.5,362.8 479.0,363.1 479.5,363.4 480.0,363.7 480.5,363.9 481.0,364.2 481.5,364.5 482.0,364.7 482.5,365.0 483.0,365.2 483.5,365.5 484.0,365.7 484.5,365.9 485.0,366.1 485.5,366.2 486.0,366.4 486.5,366.6 487.0,366.7 487.5,366.8 488.0,366.9 488.5,367.0 489.0,367.1 489.5,367.2 490.0,367.2 490.5,367.3 491.0,367.3 491.5,367.3 492.0,367.3 492.5,367.3 493.0,367.2 493.5,367.2 494.0,367.1 494.5,367.0 495.0,366.9 495.5,366.8 496.0,366.7 496.5,366.5 497.0,366.4 497.5,366.2 498.0,366.0 498.5,365.8 499.0,365.6 499.5,365.4 500.0,365.2 500.5,364.9 501.0,364.7 501.5,364.4 502.0,364.1 502.5,363.9 503.0,363.6 503.5,363.3 504.0,363.0 504.5,362.7 505.0,362.4 505.5,362.1 506.0,361.7 506.5,361.4 507.0,361.1 507.5,360.8 508.0,360.4 508.5,360.1 509.0,359.8 509.5,359.4 510.0,359.1 510.5,358.8 511.0,358.5 511.5,358.2 512.0,357.9 512.5,357.6 513.0,357.3 513.5,357.0 514.0,356.7 514.5,356.4 515.0,356.1 515.5,355.9 516.0,355.6 516.5,355.4 517.0,355.2 517.5,354.9 518.0,354.7 518.5,354.5 519.0,354.4 519.5,354.2 520.0,354.0 520.5,353.9 521.0,353.8 521.5,353.7 522.0,353.6 522.5,353.5 523.0,353.4 523.5,353.4 524.0,353.3 524.5,353.3 525.0,353.3 525.5,353.3 526.0,353.3 526.5,353.4 527.0,353.4 527.5,353.5 528.0,353.6 528.5,353.7 529.0,353.8 529.5,353.9 530.0,354.1 530.5,354.2 531.0,354.4 531.5,354.6 532.0,354.8 532.5,355.0 533.0,355.2 533.5,355.4 534.0,355.7 534.5,355.9 535.0,356.2 535.5,356.4 536.0,356.7 536.5,357.0 537.0,357.3 537.5,357.6 538.0,357.9 538.5,358.2 539.0,358.5 539.5,358.8 540.0,359.2 540.5,359.5 541.0,359.8 541.5,360.1 542.0,360.5 542.5,360.8 543.0,361.1 543.5,361.4 544.0,361.8 544.5,362.1 545.0,362.4 545.5,362.7 546.0,363.0 546.5,363.3 547.0,363.6 547.5,363.9 548.0,364.2 548.5,364.4 549.0,364.7 549.5,364.9 550.0,365.2 550.5,365.4 551.0,365.6 551.5,365.8 552.0,366.0 552.5,366.2 553.0,366.4 553.5,366.5 554.0,366.7 554.5,366.8 555.0,366.9 555.5,367.0 556.0,367.1 556.5,367.2 557.0,367.2 557.5,367.3 558.0,367.3 558.5,367.3 559.0,367.3 559.5,367.3 560.0,367.2 560.5,367.2 561.0,367.1 561.5,367.0 562.0,366.9 562.5,366.8 563.0,366.7 563.5,366.6 564.0,366.4 564.5,366.2 565.0,366.1 565.5,365.9 566.0,365.7 566.5,365.4 567.0,365.2 567.5,365.0 568.0,364.7 568.5,364.5 569.0,364.2 569.5,363.9 570.0,363.6 570.5,363.3 571.0,363.0 571.5,362.7 572.0,362.4 572.5,362.1 573.0,361.8 573.5,361.5 574.0,361.2 574.5,360.8 575.0,360.5 575.5,360.2 576.0,359.8 576.5,359.5 577.0,359.2 577.5,358.9 578.0,358.5 578.5,358.2 579.0,357.9 579.5,357.6 580.0,357.3 580.5,357.0 581.0,356.7 581.5,356.5 582.0,356.2 582.5,355.9 583.0,355.7 583.5,355.4 584.0,355.2 584.5,355.0 585.0,354.8 585.5,354.6 586.0,354.4 586.5,354.2 587.0,354.1 587.5,353.9 588.0,353.8 588.5,353.7 589.0,353.6 589.5,353.5 590.0,353.4 590.5,353.4 591.0,353.3 591.5,353.3 592.0,353.3 592.5,353.3 593.0,353.3 593.5,353.4 594.0,353.4 594.5,353.5 595.0,353.6 595.5,353.7 596.0,353.8 596.5,353.9 597.0,354.0 597.5,354.2 598.0,354.4 598.5,354.5 599.0,354.7 599.5,354.9 600.0,355.1 600.5,355.4 601.0,355.6 601.5,355.9 602.0,356.1 602.5,356.4 603.0,356.7 603.5,356.9 604.0,357.2 604.5,357.5 605.0,357.8 605.5,358.1 606.0,358.5 606.5,358.8 607.0,359.1 607.5,359.4 608.0,359.7 608.5,360.1 609.0,360.4 609.5,360.7 610.0,361.1 610.5,361.4 611.0,361.7 611.5,362.0 612.0,362.3 612.5,362.6 613.0,363.0 613.5,363.3 614.0,363.5 614.5,363.8 615.0,364.1 615.5,364.4 616.0,364.6 616.5,364.9 617.0,365.1 617.5,365.4 618.0,365.6 618.5,365.8 619.0,366.0 619.5,366.2 620.0,366.4 620.5,366.5 621.0,366.7 621.5,366.8 622.0,366.9 622.5,367.0 623.0,367.1 623.5,367.2 624.0,367.2 624.5,367.3 625.0,367.3 625.5,367.3 626.0,367.3 626.5,367.3 627.0,367.2 627.5,367.2 628.0,367.1 628.5,367.0 629.0,367.0 629.5,366.8 630.0,366.7 630.5,366.6 631.0,366.4 631.5,366.3 632.0,366.1 632.5,365.9 633.0,365.7 633.5,365.5 634.0,365.3 634.5,365.0 635.0,364.8 635.5,364.5 636.0,364.2 636.5,364.0 637.0,363.7 637.5,363.4 638.0,363.1 638.5,362.8 639.0,362.5 639.5,362.2 640.0,361.9 640.5,361.5 641.0,361.2 641.5,360.9 642.0,360.6 642.5,360.2 643.0,359.9 643.5,359.6 644.0,359.3 644.5,358.9 645.0,358.6 645.5,358.3 646.0,358.0 646.5,357.7 647.0,357.4 647.5,357.1 648.0,356.8 648.5,356.5 649.0,356.2 649.5,356.0 650.0,355.7 650.5,355.5 651.0,355.3 651.5,355.0 652.0,354.8 652.5,354.6 653.0,354.4 653.5,354.3 654.0,354.1 654.5,354.0 655.0,353.8 655.5,353.7 656.0,353.6 656.5,353.5 657.0,353.4 657.5,353.4 658.0,353.3 658.5,353.3 659.0,353.3 659.5,353.3 660.0,353.3 660.5,353.4 661.0,353.4 661.5,353.5 662.0,353.5 662.5,353.6 663.0,353.7 663.5,353.9 664.0,354.0 664.5,354.2 665.0,354.3 665.5,354.5 666.0,354.7 666.5,354.9 667.0,355.1 667.5,355.3 668.0,355.6 668.5,355.8 669.0,356.1 669.5,356.3 670.0,356.6 670.5,356.9 671.0,357.2 671.5,357.5 672.0,357.8 672.5,358.1 673.0,358.4 673.5,358.7 674.0,359.0 674.5,359.4 675.0,359.7 675.5,360.0 676.0,360.3 676.5,360.7 677.0,361.0 677.5,361.3 678.0,361.6 678.5,362.0 679.0,362.3 679.5,362.6 680.0,362.9 680.5,363.2 681.0,363.5 681.5,363.8 682.0,364.1 682.5,364.3 683.0,364.6 683.5,364.8 684.0,365.1 684.5,365.3 685.0,365.5 685.5,365.8 686.0,366.0 686.5,366.1 687.0,366.3 687.5,366.5 688.0,366.6 688.5,366.8 689.0,366.9 689.5,367.0 690.0,367.1 690.5,367.1 691.0,367.2 691.5,367.3 692.0,367.3 692.5,367.3 693.0,367.3 693.5,367.3 694.0,367.3 694.5,367.2 695.0,367.1 695.5,367.1 696.0,367.0 696.5,366.9 697.0,366.7 697.5,366.6 698.0,366.5 698.5,366.3 699.0,366.1 699.5,365.9 700.0,365.7 700.5,365.5 701.0,365.3 701.5,365.1 702.0,364.8 702.5,364.6 703.0,364.3 703.5,364.0 704.0,363.7 704.5,363.5 705.0,363.2 705.5,362.9 706.0,362.6 706.5,362.2 707.0,361.9 707.5,361.6 708.0,361.3 708.5,361.0 709.0,360.6 709.5,360.3" fill="none" stroke="#00E000" stroke-width="1" shape-rendering="crispEdges"/>
<defs>
<path id="px0" d="M1,0h4v1h-4zM0,1h2v1h-2zM3,1h2v1h-2zM0,2h2v1h-2zM3,2h2v1h-2zM0,3h5v1h-5zM0,4h3v1h-3zM4,4h1v1h-1zM0,5h3v1h-3zM4,5h1v1h-1zM0,6h4v1h-4z"/>
<path id="px1" d="M3,0h1v1h-1zM2,1h2v1h-2zM1,2h1v1h-1zM3,2h1v1h-1zM3,3h1v1h-1zM3,4h1v1h-1zM3,5h1v1h-1zM3,6h1v1h-1z"/>
<path id="px2" d="M1,0h3v1h-3zM0,1h1v1h-1zM4,1h1v1h-1zM4,2h1v1h-1zM1,3h3v1h-3zM0,4h1v1h-1zM0,5h1v1h-1zM0,6h5v1h-5z"/>
<path id="px3" d="M1,0h3v1h-3zM0,1h1v1h-1zM4,1h1v1h-1zM4,2h1v1h-1zM2,3h2v1h-2zM4,4h1v1h-1zM0,5h1v1h-1zM4,5h1v1h-1zM1,6h3v1h-3z"/>
<path id="px4" d="M3,0h1v1h-1zM2,1h2v1h-2zM1,2h1v1h-1zM3,2h1v1h-1zM0,3h1v1h-1zM3,3h1v1h-1zM0,4h5v1h-5zM3,5h1v1h-1zM3,6h1v1h-1z"/>
<path id="px5" d="M0,0h5v1h-5zM0,1h1v1h-1zM0,2h4v1h-4zM4,3h1v1h-1zM4,4h1v1h-1zM0,5h1v1h-1zM4,5h1v1h-1zM1,6h3v1h-3z"/>
<path id="px6" d="M1,0h3v1h-3zM0,1h1v1h-1zM4,1h1v1h-1zM0,2h1v1h-1zM0,3h4v1h-4zM0,4h1v1h-1zM4,4h1v1h-1zM0,5h1v1h-1zM4,5h1v1h-1zM1,6h3v1h-3z"/>
<path id="px7" d="M0,0h5v1h-5zM4,1h1v1h-1zM3,2h1v1h-1zM2,3h1v1h-1zM2,4h1v1h-1zM2,5h1v1h-1zM2,6h1v1h-1z"/>
<path id="px8" d="M1,0h3v1h-3zM0,1h1v1h-1zM4,1h1v1h-1zM0,2h1v1h-1zM4,2h1v1h-1zM1,3h3v1h-3zM0,4h1v1h-1zM4,4h1v1h-1zM0,5h1v1h-1zM4,5h1v1h-1zM1,6h3v1h-3z"/>
<path id="px9" d="M1,0h3v1h-3zM0,1h1v1h-1zM4,1h1v1h-1zM0,2h1v1h-1zM4,2h1v1h-1zM1,3h4v1h-4zM4,4h1v1h-1zM0,5h1v1h-1zM4,5h1v1h-1zM1,6h3v1h-3z"/>
<path id="pxdot" d="M2,5h2v1h-2zM2,6h2v1h-2z"/>
<path id="pxneg" d="M0,3h5v1h-5z"/>
<path id="pxm" d="M0,2h2v1h-2zM3,2h1v1h-1zM0,3h1v1h-1zM2,3h1v1h-1zM4,3h1v1h-1zM0,4h1v1h-1zM2,4h1v1h-1zM4,4h1v1h-1zM0,5h1v1h-1zM4,5h1v1h-1zM0,6h1v1h-1zM4,6h1v1h-1z"/>
<path id="pxG" d="M1,0h4v1h-4zM0,1h1v1h-1zM0,2h1v1h-1zM0,3h1v1h-1zM0,4h1v1h-1zM3,4h2v1h-2zM0,5h1v1h-1zM4,5h1v1h-1zM1,6h4v1h-4z"/>
<path id="pxe" d="M1,2h3v1h-3zM0,3h1v1h-1zM4,3h1v1h-1zM0,4h5v1h-5zM0,5h1v1h-1zM1,6h4v1h-4z"/>
<path id="pxn" d="M0,2h4v1h-4zM0,3h1v1h-1zM4,3h1v1h-1zM0,4h1v1h-1zM4,4h1v1h-1zM0,5h1v1h-1zM4,5h1v1h-1zM0,6h1v1h-1zM4,6h1v1h-1z"/>
<path id="pxr" d="M0,2h4v1h-4zM0,3h1v1h-1zM4,3h1v1h-1zM0,4h1v1h-1zM0,5h1v1h-1zM0,6h1v1h-1z"/>
<path id="pxa" d="M1,2h3v1h-3zM4,3h1v1h-1zM1,4h4v1h-4zM0,5h1v1h-1zM4,5h1v1h-1zM1,6h4v1h-4z"/>
<path id="pxt" d="M0,0h1v1h-1zM0,1h1v1h-1zM0,2h4v1h-4zM0,3h1v1h-1zM0,4h1v1h-1zM0,5h1v1h-1zM4,5h1v1h-1zM1,6h3v1h-3z"/>
<path id="pxo" d="M1,2h3v1h-3zM0,3h1v1h-1zM4,3h1v1h-1zM0,4h1v1h-1zM4,4h1v1h-1zM0,5h1v1h-1zM4,5h1v1h-1zM1,6h3v1h-3z"/>
<path id="pxO" d="M1,0h3v1h-3zM0,1h1v1h-1zM4,1h1v1h-1zM0,2h1v1h-1zM4,2h1v1h-1zM0,3h1v1h-1zM4,3h1v1h-1zM0,4h1v1h-1zM4,4h1v1h-1zM0,5h1v1h-1zM4,5h1v1h-1zM1,6h3v1h-3z"/>
<path id="pxu" d="M0,2h1v1h-1zM4,2h1v1h-1zM0,3h1v1h-1zM4,3h1v1h-1zM0,4h1v1h-1zM4,4h1v1h-1zM0,5h1v1h-1zM4,5h1v1h-1zM1,6h4v1h-4z"/>
<path id="pxD" d="M0,0h4v1h-4zM0,1h1v1h-1zM4,1h1v1h-1zM0,2h1v1h-1zM4,2h1v1h-1zM0,3h1v1h-1zM4,3h1v1h-1zM0,4h1v1h-1zM4,4h1v1h-1zM0,5h1v1h-1zM4,5h1v1h-1zM0,6h4v1h-4z"/>
<path id="pxC" d="M1,0h3v1h-3zM0,1h1v1h-1zM4,1h1v1h-1zM0,2h1v1h-1zM0,3h1v1h-1zM0,4h1v1h-1zM0,5h1v1h-1zM4,5h1v1h-1zM1,6h3v1h-3z"/>
<path id="pwA" d="M2,0h3v1h-3zM1,1h1v1h-1zM5,1h1v1h-1zM0,2h1v1h-1zM6,2h1v1h-1zM0,3h1v1h-1zM6,3h1v1h-1zM0,4h7v1h-7zM0,5h1v1h-1zM6,5h1v1h-1zM0,6h1v1h-1zM6,6h1v1h-1z"/>
<path id="pwN" d="M0,0h1v1h-1zM6,0h1v1h-1zM0,1h2v1h-2zM6,1h1v1h-1zM0,2h1v1h-1zM2,2h1v1h-1zM6,2h1v1h-1zM0,3h1v1h-1zM3,3h1v1h-1zM6,3h1v1h-1zM0,4h1v1h-1zM4,4h1v1h-1zM6,4h1v1h-1zM0,5h1v1h-1zM5,5h2v1h-2zM0,6h1v1h-1zM6,6h1v1h-1z"/>
<path id="pwL" d="M0,0h1v1h-1zM0,1h1v1h-1zM0,2h1v1h-1zM0,3h1v1h-1zM0,4h1v1h-1zM0,5h1v1h-1zM0,6h7v1h-7z"/>
<path id="pwO" d="M2,0h3v1h-3zM1,1h1v1h-1zM5,1h1v1h-1zM0,2h1v1h-1zM6,2h1v1h-1zM0,3h1v1h-1zM6,3h1v1h-1zM0,4h1v1h-1zM6,4h1v1h-1zM1,5h1v1h-1zM5,5h1v1h-1zM2,6h3v1h-3z"/>
<path id="pwG" d="M2,0h5v1h-5zM1,1h1v1h-1zM0,2h1v1h-1zM0,3h1v1h-1zM0,4h1v1h-1zM4,4h3v1h-3zM1,5h1v1h-1zM6,5h1v1h-1zM2,6h5v1h-5z"/>
<path id="pwU" d="M0,0h1v1h-1zM6,0h1v1h-1zM0,1h1v1h-1zM6,1h1v1h-1zM0,2h1v1h-1zM6,2h1v1h-1zM0,3h1v1h-1zM6,3h1v1h-1zM0,4h1v1h-1zM6,4h1v1h-1zM0,5h1v1h-1zM6,5h1v1h-1zM1,6h5v1h-5z"/>
<path id="pwE" d="M0,0h7v1h-7zM0,1h1v1h-1zM0,2h1v1h-1zM0,3h5v1h-5zM0,4h1v1h-1zM0,5h1v1h-1zM0,6h7v1h-7z"/>
<path id="pwY" d="M0,0h1v1h-1zM6,0h1v1h-1zM1,1h1v1h-1zM5,1h1v1h-1zM2,2h1v1h-1zM4,2h1v1h-1zM3,3h1v1h-1zM3,4h1v1h-1zM3,5h1v1h-1zM3,6h1v1h-1z"/>
<path id="pwS" d="M1,0h5v1h-5zM0,1h1v1h-1zM6,1h1v1h-1zM0,2h1v1h-1zM1,3h5v1h-5zM6,4h1v1h-1zM0,5h1v1h-1zM6,5h1v1h-1zM1,6h5v1h-5z"/>
<path id="pwI" d="M1,0h5v1h-5zM3,1h1v1h-1zM3,2h1v1h-1zM3,3h1v1h-1zM3,4h1v1h-1zM3,5h1v1h-1zM1,6h5v1h-5z"/>
</defs>
<g fill="#001400" shape-rendering="crispEdges">
<use href="#pwA" x="282" y="4"/>
<use href="#pwN" x="291" y="4"/>
<use href="#pwA" x="300" y="4"/>
<use href="#pwL" x="309" y="4"/>
<use href="#pwO" x="318" y="4"/>
<use href="#pwG" x="327" y="4"/>
<use href="#pwU" x="336" y="4"/>
<use href="#pwE" x="345" y="4"/>
<use href="#pwA" x="363" y="4"/>
<use href="#pwN" x="372" y="4"/>
<use href="#pwA" x="381" y="4"/>
<use href="#pwL" x="390" y="4"/>
<use href="#pwY" x="399" y="4"/>
<use href="#pwS" x="408" y="4"/>
<use href="#pwI" x="417" y="4"/>
<use href="#pwS" x="426" y="4"/>
</g>
<g fill="#00D8D8" shape-rendering="crispEdges">
<use href="#px5" x="13" y="17"/>
<use href="#pxdot" x="19" y="17"/>
<use href="#px0" x="25" y="17"/>
<use href="#px0" x="31" y="17"/>
</g>
<g fill="#00D8D8" shape-rendering="crispEdges">
<use href="#px4" x="13" y="47"/>
<use href="#pxdot" x="19" y="47"/>
<use href="#px5" x="25" y="47"/>
<use href="#px0" x="31" y="47"/>
</g>
<g fill="#00D8D8" shape-rendering="crispEdges">
<use href="#px4" x="13" y="81"/>
<use href="#pxdot" x="19" y="81"/>
<use href="#px0" x="25" y="81"/>
<use href="#px0" x="31" y="81"/>
</g>
<g fill="#00D8D8" shape-rendering="crispEdges">
<use href="#px3" x="13" y="116"/>
<use href="#pxdot" x="19" y="116"/>
<use href="#px5" x="25" y="116"/>
<use href="#px0" x="31" y="116"/>
</g>
<g fill="#00D8D8" shape-rendering="crispEdges">
<use href="#px3" x="13" y="150"/>
<use href="#pxdot" x="19" y="150"/>
<use href="#px0" x="25" y="150"/>
<use href="#px0" x="31" y="150"/>
</g>
<g fill="#00D8D8" shape-rendering="crispEdges">
<use href="#px2" x="13" y="185"/>
<use href="#pxdot" x="19" y="185"/>
<use href="#px5" x="25" y="185"/>
<use href="#px0" x="31" y="185"/>
</g>
<g fill="#00D8D8" shape-rendering="crispEdges">
<use href="#px2" x="13" y="219"/>
<use href="#pxdot" x="19" y="219"/>
<use href="#px0" x="25" y="219"/>
<use href="#px0" x="31" y="219"/>
</g>
<g fill="#00D8D8" shape-rendering="crispEdges">
<use href="#px1" x="13" y="254"/>
<use href="#pxdot" x="19" y="254"/>
<use href="#px5" x="25" y="254"/>
<use href="#px0" x="31" y="254"/>
</g>
<g fill="#00D8D8" shape-rendering="crispEdges">
<use href="#px1" x="13" y="288"/>
<use href="#pxdot" x="19" y="288"/>
<use href="#px0" x="25" y="288"/>
<use href="#px0" x="31" y="288"/>
</g>
<g fill="#00D8D8" shape-rendering="crispEdges">
<use href="#px5" x="13" y="323"/>
<use href="#px0" x="19" y="323"/>
<use href="#px0" x="25" y="323"/>
<use href="#pxm" x="31" y="323"/>
</g>
<g fill="#00D8D8" shape-rendering="crispEdges">
<use href="#px0" x="13" y="357"/>
<use href="#pxdot" x="19" y="357"/>
<use href="#px0" x="25" y="357"/>
<use href="#px0" x="31" y="357"/>
</g>
<g fill="#00D8D8" shape-rendering="crispEdges">
<use href="#pxneg" x="7" y="387"/>
<use href="#px5" x="13" y="387"/>
<use href="#px0" x="19" y="387"/>
<use href="#px0" x="25" y="387"/>
<use href="#pxm" x="31" y="387"/>
</g>
<g fill="#00D8D8" shape-rendering="crispEdges">
<use href="#px0" x="38" y="397"/>
<use href="#pxdot" x="44" y="397"/>
<use href="#px0" x="50" y="397"/>
<use href="#px0" x="56" y="397"/>
</g>
<g fill="#00D8D8" shape-rendering="crispEdges">
<use href="#px1" x="90" y="397"/>
<use href="#pxdot" x="96" y="397"/>
<use href="#px0" x="102" y="397"/>
<use href="#px0" x="108" y="397"/>
<use href="#pxm" x="114" y="397"/>
</g>
<g fill="#00D8D8" shape-rendering="crispEdges">
<use href="#px2" x="157" y="397"/>
<use href="#pxdot" x="163" y="397"/>
<use href="#px0" x="169" y="397"/>
<use href="#px0" x="175" y="397"/>
<use href="#pxm" x="181" y="397"/>
</g>
<g fill="#00D8D8" shape-rendering="crispEdges">
<use href="#px3" x="225" y="397"/>
<use href="#pxdot" x="231" y="397"/>
<use href="#px0" x="237" y="397"/>
<use href="#px0" x="243" y="397"/>
<use href="#pxm" x="249" y="397"/>
</g>
<g fill="#00D8D8" shape-rendering="crispEdges">
<use href="#px4" x="292" y="397"/>
<use href="#pxdot" x="298" y="397"/>
<use href="#px0" x="304" y="397"/>
<use href="#px0" x="310" y="397"/>
<use href="#pxm" x="316" y="397"/>
</g>
<g fill="#00D8D8" shape-rendering="crispEdges">
<use href="#px5" x="358" y="397"/>
<use href="#pxdot" x="364" y="397"/>
<use href="#px0" x="370" y="397"/>
<use href="#px0" x="376" y="397"/>
<use href="#pxm" x="382" y="397"/>
</g>
<g fill="#00D8D8" shape-rendering="crispEdges">
<use href="#px6" x="425" y="397"/>
<use href="#pxdot" x="431" y="397"/>
<use href="#px0" x="437" y="397"/>
<use href="#px0" x="443" y="397"/>
<use href="#pxm" x="449" y="397"/>
</g>
<g fill="#00D8D8" shape-rendering="crispEdges">
<use href="#px7" x="493" y="397"/>
<use href="#pxdot" x="499" y="397"/>
<use href="#px0" x="505" y="397"/>
<use href="#px0" x="511" y="397"/>
<use href="#pxm" x="517" y="397"/>
</g>
<g fill="#00D8D8" shape-rendering="crispEdges">
<use href="#px8" x="560" y="397"/>
<use href="#pxdot" x="566" y="397"/>
<use href="#px0" x="572" y="397"/>
<use href="#px0" x="578" y="397"/>
<use href="#pxm" x="584" y="397"/>
</g>
<g fill="#00D8D8" shape-rendering="crispEdges">
<use href="#px9" x="627" y="397"/>
<use href="#pxdot" x="633" y="397"/>
<use href="#px0" x="639" y="397"/>
<use href="#px0" x="645" y="397"/>
<use href="#pxm" x="651" y="397"/>
</g>
<g fill="#00D8D8" shape-rendering="crispEdges">
<use href="#px1" x="679" y="397"/>
<use href="#px0" x="685" y="397"/>
<use href="#pxdot" x="691" y="397"/>
<use href="#px0" x="697" y="397"/>
<use href="#pxm" x="703" y="397"/>
</g>
<g fill="#00FF00" shape-rendering="crispEdges">
<use href="#pxG" x="44" y="17"/>
<use href="#pxe" x="50" y="17"/>
<use href="#pxn" x="56" y="17"/>
<use href="#pxe" x="62" y="17"/>
<use href="#pxr" x="68" y="17"/>
<use href="#pxa" x="74" y="17"/>
<use href="#pxt" x="80" y="17"/>
<use href="#pxo" x="86" y="17"/>
<use href="#pxr" x="92" y="17"/>
</g>
<g fill="#FF0000" shape-rendering="crispEdges">
<use href="#pxO" x="44" y="27"/>
<use href="#pxu" x="50" y="27"/>
<use href="#pxt" x="56" y="27"/>
</g>
<g fill="#0000FF" shape-rendering="crispEdges">
<use href="#pxD" x="44" y="37"/>
<use href="#pxC" x="50" y="37"/>
</g>
</svg>
</body></html>
